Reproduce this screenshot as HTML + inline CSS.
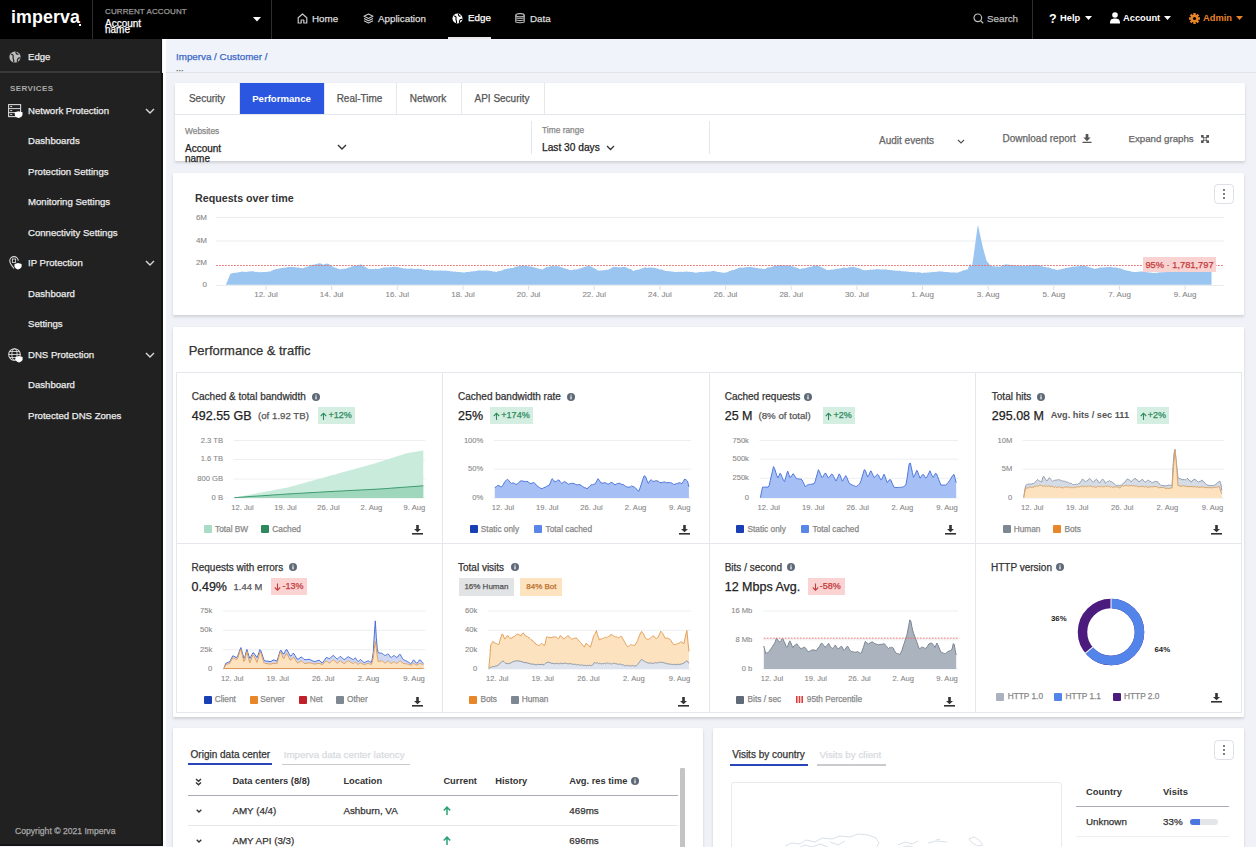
<!DOCTYPE html><html><head><meta charset="utf-8"><style>
*{box-sizing:border-box;margin:0;padding:0}
html,body{width:1256px;height:849px;overflow:hidden;background:#f0f2f8;font-family:"Liberation Sans",sans-serif;color:#333;-webkit-text-stroke:0.25px currentColor}
.a{position:absolute;white-space:nowrap}
.hdr{position:absolute;left:0;top:0;width:1256px;height:39px;background:#000}
.side{position:absolute;left:0;top:39px;width:163px;height:807px;background:#212121;border-right:2px solid #141414;border-bottom:2px solid #141414}
.card{position:absolute;background:#fff;border-radius:1px;box-shadow:0 2px 3px rgba(0,0,0,.13),0 0 1px rgba(0,0,0,.08)}
.si{position:absolute;left:28px;font-size:9.6px;color:#ececec;line-height:12px}
.t{line-height:1}
svg{position:absolute;overflow:visible}
[style*="font-weight:700"]{-webkit-text-stroke:0}
</style></head><body>
<div class="hdr">
<div class="a" style="left:11px;top:7px;font-size:17.8px;font-weight:700;color:#fff;letter-spacing:0.1px">imperva</div>
<div class="a" style="left:78.5px;top:24px;width:2px;height:2px;background:#fff"></div>
<div class="a" style="left:92px;top:0;width:1px;height:39px;background:#2e2e2e"></div>
<div class="a" style="left:271px;top:0;width:1px;height:39px;background:#2e2e2e"></div>
<div class="a" style="left:105px;top:6.5px;font-size:8px;color:#9a9a9a;letter-spacing:0.1px">CURRENT ACCOUNT</div>
<div class="a" style="left:105px;top:20.5px;font-size:10px;color:#fff;line-height:6.2px">Account<br>name</div>
<svg style="left:252.5px;top:16.5px" width="8" height="5"><path d="M0,0 L8,0 L4,4.5 Z" fill="#fff"/></svg>
<div class="a" style="left:312px;top:13px;font-size:9.8px;color:#dcdcdc">Home</div>
<div class="a" style="left:378px;top:13px;font-size:9.8px;color:#dcdcdc">Application</div>
<div class="a" style="left:468px;top:12px;font-size:9.8px;color:#fff">Edge</div>
<div class="a" style="left:530px;top:13px;font-size:9.8px;color:#dcdcdc">Data</div>
<div class="a" style="left:448px;top:37px;width:43px;height:2px;background:#e8e8e8"></div>
<div class="a" style="left:987px;top:13px;font-size:9.8px;color:#bdbdbd">Search</div>
<div class="a" style="left:1032px;top:0;width:1px;height:39px;background:#2e2e2e"></div>
<div class="a" style="left:1060px;top:13px;font-size:9.3px;color:#fff;font-weight:700">Help</div>
<div class="a" style="left:1123px;top:13px;font-size:9.3px;color:#fff;font-weight:700">Account</div>
<div class="a" style="left:1203px;top:13px;font-size:9.3px;color:#e8832a;font-weight:700">Admin</div>
</div>
<div class="side">
<div class="a" style="left:0;top:32px;width:160px;height:2px;background:#393939"></div>
</div>
<div class="si" style="top:51.0px;left:28px">Edge</div>
<div class="si" style="top:104.5px;left:28px">Network Protection</div>
<div class="si" style="top:135.0px;left:28px">Dashboards</div>
<div class="si" style="top:165.5px;left:28px">Protection Settings</div>
<div class="si" style="top:196.0px;left:28px">Monitoring Settings</div>
<div class="si" style="top:226.5px;left:28px">Connectivity Settings</div>
<div class="si" style="top:257.0px;left:28px">IP Protection</div>
<div class="si" style="top:287.5px;left:28px">Dashboard</div>
<div class="si" style="top:318.0px;left:28px">Settings</div>
<div class="si" style="top:348.5px;left:28px">DNS Protection</div>
<div class="si" style="top:379.0px;left:28px">Dashboard</div>
<div class="si" style="top:409.5px;left:28px">Protected DNS Zones</div>
<div class="a" style="left:10px;top:84px;font-size:8px;font-weight:700;color:#a8a8a8;letter-spacing:0.4px">SERVICES</div>
<div class="a" style="left:15px;top:826px;font-size:8.6px;color:#a8a8a8">Copyright © 2021 Imperva</div>
<div class="a" style="left:162px;top:39px;width:1094px;height:34px;background:#f0f3f9;border-bottom:1px solid #dfe4ec"></div>
<div class="a" style="left:163px;top:39px;width:2.5px;height:808px;background:#fff"></div>
<div class="a" style="left:176px;top:51px;font-size:9.8px;color:#3a68c8">Imperva / Customer /</div>
<div class="a" style="left:176px;top:63px;font-size:9px;color:#666">...</div>
<div class="card" style="left:175px;top:83px;width:1070px;height:78px"></div>
<div class="a" style="left:175px;top:114px;width:1070px;height:1px;background:#e3e6eb"></div>
<div class="a t" style="left:175px;top:94px;width:64px;text-align:center;font-size:10px;color:#555">Security</div>
<div class="a" style="left:239px;top:83px;width:1px;height:31px;background:#e6e8ec"></div>
<div class="a" style="left:239.5px;top:83px;width:84.0px;height:31px;background:#2a56e0"></div>
<div class="a t" style="left:239.5px;top:94px;width:84.0px;text-align:center;font-size:9.6px;font-weight:700;color:#fff">Performance</div>
<div class="a" style="left:323.5px;top:83px;width:1px;height:31px;background:#e6e8ec"></div>
<div class="a t" style="left:323.5px;top:94px;width:72.0px;text-align:center;font-size:10px;color:#555">Real-Time</div>
<div class="a" style="left:395.5px;top:83px;width:1px;height:31px;background:#e6e8ec"></div>
<div class="a t" style="left:395.5px;top:94px;width:65.0px;text-align:center;font-size:10px;color:#555">Network</div>
<div class="a" style="left:460.5px;top:83px;width:1px;height:31px;background:#e6e8ec"></div>
<div class="a t" style="left:460.5px;top:94px;width:83.0px;text-align:center;font-size:10px;color:#555">API Security</div>
<div class="a" style="left:543.5px;top:83px;width:1px;height:31px;background:#e6e8ec"></div>
<div class="a t" style="left:185px;top:126.5px;font-size:8.4px;color:#888">Websites</div>
<div class="a" style="left:185px;top:144.3px;font-size:10px;color:#222;line-height:9.5px">Account<br>name</div>
<svg style="left:337px;top:144.3px" width="10" height="7"><path d="M1,1 L5,5 L9,1" fill="none" stroke="#333" stroke-width="1.4"/></svg>
<div class="a" style="left:531px;top:121px;width:1px;height:33px;background:#e3e6eb"></div>
<div class="a" style="left:709px;top:121px;width:1px;height:33px;background:#e3e6eb"></div>
<div class="a t" style="left:542px;top:126.3px;font-size:8.4px;color:#888">Time range</div>
<div class="a t" style="left:542px;top:143px;font-size:10.2px;color:#222">Last 30 days</div>
<svg style="left:606px;top:145px" width="9" height="6"><path d="M1,1 L4.5,4.5 L8,1" fill="none" stroke="#333" stroke-width="1.3"/></svg>
<div class="a t" style="left:879px;top:135.5px;font-size:10px;color:#666">Audit events</div>
<svg style="left:957px;top:139px" width="8" height="5"><path d="M1,1 L4,4 L7,1" fill="none" stroke="#555" stroke-width="1.2"/></svg>
<div class="a t" style="left:1002.5px;top:134px;font-size:10px;color:#666">Download report</div>
<svg style="left:1082px;top:134px" width="10" height="9" viewBox="0 0 10 10"><path d="M3.5,0 H6.5 V4 H9 L5,8 L1,4 H3.5 Z M0,8.5 H10 V10 H0 Z" fill="#555"/></svg>
<div class="a t" style="left:1128.5px;top:134px;font-size:9.7px;color:#666">Expand graphs</div>
<svg style="left:1200.5px;top:135px" width="8" height="8" viewBox="0 0 9 9"><path d="M0,0 H3.5 L2.4,1.1 L4.5,3.2 L3.2,4.5 L1.1,2.4 L0,3.5 Z M9,0 V3.5 L7.9,2.4 L5.8,4.5 L4.5,3.2 L6.6,1.1 L5.5,0 Z M0,9 V5.5 L1.1,6.6 L3.2,4.5 L4.5,5.8 L2.4,7.9 L3.5,9 Z M9,9 H5.5 L6.6,7.9 L4.5,5.8 L5.8,4.5 L7.9,6.6 L9,5.5 Z" fill="#555"/></svg>
<div class="card" style="left:173px;top:173px;width:1071px;height:142px"></div>
<div class="a t" style="left:195px;top:193px;font-size:10.7px;font-weight:700;color:#333">Requests over time</div>
<div class="a" style="left:1214px;top:184px;width:20px;height:20px;border:1px solid #dcdfe4;border-radius:4px"></div>
<svg style="left:1223px;top:189px" width="2" height="10"><circle cx="1" cy="1" r="0.9" fill="#444"/><circle cx="1" cy="5" r="0.9" fill="#444"/><circle cx="1" cy="9" r="0.9" fill="#444"/></svg>
<div class="a t" style="right:1049px;top:213.7px;font-size:8px;color:#888;text-align:right;-webkit-text-stroke:0.1px #888">6M</div>
<div class="a t" style="right:1049px;top:236.7px;font-size:8px;color:#888;text-align:right;-webkit-text-stroke:0.1px #888">4M</div>
<div class="a t" style="right:1049px;top:259.2px;font-size:8px;color:#888;text-align:right;-webkit-text-stroke:0.1px #888">2M</div>
<div class="a t" style="right:1049px;top:281.4px;font-size:8px;color:#888;text-align:right;-webkit-text-stroke:0.1px #888">0</div>
<svg style="left:0;top:0" width="1256" height="849"><line x1="216" y1="217.5" x2="1224" y2="217.5" stroke="#e9ecef" stroke-width="1"/><line x1="216" y1="241" x2="1224" y2="241" stroke="#e9ecef" stroke-width="1"/><line x1="216" y1="285.5" x2="1224" y2="285.5" stroke="#e9ecef" stroke-width="1"/><path d="M226.0,284.8 L226.0,284.5 L226.5,283.3 L227.0,282.1 L227.5,280.9 L228.0,279.6 L228.5,278.4 L229.0,277.1 L229.5,275.9 L230.0,274.7 L230.5,273.7 L231.0,273.7 L231.5,273.4 L232.0,273.1 L232.5,273.2 L233.0,273.0 L233.5,272.8 L234.0,272.9 L234.5,272.8 L235.0,272.9 L235.5,272.7 L236.0,272.7 L236.5,272.5 L237.0,272.4 L237.5,272.5 L238.0,272.4 L238.5,272.3 L239.0,272.3 L239.5,272.0 L240.0,272.0 L240.5,271.9 L241.0,271.8 L241.5,271.6 L242.0,271.7 L242.5,271.6 L243.0,271.7 L243.5,271.8 L244.0,271.8 L244.5,271.9 L245.0,271.8 L245.5,271.9 L246.0,271.8 L246.5,271.9 L247.0,272.0 L247.5,271.8 L248.0,271.6 L248.5,271.4 L249.0,271.5 L249.5,271.5 L250.0,271.5 L250.5,271.3 L251.0,271.3 L251.5,271.3 L252.0,271.2 L252.5,271.3 L253.0,271.3 L253.5,271.5 L254.0,271.5 L254.5,271.7 L255.0,271.8 L255.5,272.0 L256.0,272.0 L256.5,271.8 L257.0,271.9 L257.5,272.1 L258.0,272.2 L258.5,272.2 L259.0,272.2 L259.5,272.1 L260.0,272.2 L260.5,272.2 L261.0,272.1 L261.5,271.9 L262.0,272.0 L262.5,272.2 L263.0,272.0 L263.5,272.1 L264.0,272.0 L264.5,271.9 L265.0,271.8 L265.5,271.9 L266.0,272.0 L266.5,271.9 L267.0,271.9 L267.5,271.7 L268.0,271.7 L268.5,271.5 L269.0,271.5 L269.5,271.5 L270.0,271.4 L270.5,271.4 L271.0,271.1 L271.5,270.8 L272.0,270.7 L272.5,270.4 L273.0,270.1 L273.5,269.9 L274.0,269.8 L274.5,269.6 L275.0,269.3 L275.5,269.3 L276.0,269.1 L276.5,269.1 L277.0,269.1 L277.5,269.0 L278.0,268.8 L278.5,268.7 L279.0,268.6 L279.5,268.5 L280.0,268.3 L280.5,268.2 L281.0,268.2 L281.5,268.1 L282.0,267.9 L282.5,267.9 L283.0,267.7 L283.5,267.6 L284.0,267.8 L284.5,267.7 L285.0,267.7 L285.5,267.5 L286.0,267.4 L286.5,267.4 L287.0,267.2 L287.5,267.2 L288.0,267.2 L288.5,267.0 L289.0,267.1 L289.5,267.0 L290.0,267.1 L290.5,267.0 L291.0,267.1 L291.5,267.1 L292.0,266.9 L292.5,266.7 L293.0,266.9 L293.5,267.2 L294.0,267.1 L294.5,267.2 L295.0,267.3 L295.5,267.3 L296.0,267.4 L296.5,267.4 L297.0,267.4 L297.5,267.6 L298.0,267.6 L298.5,267.6 L299.0,267.8 L299.5,267.8 L300.0,267.9 L300.5,268.1 L301.0,268.1 L301.5,268.1 L302.0,268.3 L302.5,268.3 L303.0,268.2 L303.5,268.0 L304.0,267.9 L304.5,267.6 L305.0,267.4 L305.5,267.2 L306.0,267.2 L306.5,267.0 L307.0,266.9 L307.5,266.7 L308.0,266.4 L308.5,266.3 L309.0,266.3 L309.5,266.1 L310.0,265.9 L310.5,265.5 L311.0,265.4 L311.5,265.1 L312.0,265.1 L312.5,265.1 L313.0,264.8 L313.5,264.6 L314.0,264.6 L314.5,264.5 L315.0,264.5 L315.5,264.4 L316.0,264.1 L316.5,263.9 L317.0,263.9 L317.5,263.8 L318.0,263.6 L318.5,263.5 L319.0,263.3 L319.5,263.3 L320.0,263.6 L320.5,263.6 L321.0,263.5 L321.5,263.8 L322.0,264.1 L322.5,264.4 L323.0,264.5 L323.5,264.8 L324.0,264.7 L324.5,264.3 L325.0,264.1 L325.5,264.0 L326.0,263.8 L326.5,263.5 L327.0,263.6 L327.5,263.8 L328.0,263.9 L328.5,264.0 L329.0,264.3 L329.5,264.5 L330.0,264.9 L330.5,265.0 L331.0,265.4 L331.5,265.8 L332.0,266.2 L332.5,266.6 L333.0,267.0 L333.5,267.3 L334.0,267.3 L334.5,267.6 L335.0,267.6 L335.5,267.7 L336.0,267.9 L336.5,268.1 L337.0,268.3 L337.5,268.6 L338.0,268.8 L338.5,268.9 L339.0,269.0 L339.5,269.3 L340.0,269.5 L340.5,269.5 L341.0,269.3 L341.5,269.1 L342.0,269.0 L342.5,269.0 L343.0,268.8 L343.5,268.8 L344.0,268.8 L344.5,268.8 L345.0,268.8 L345.5,268.5 L346.0,268.4 L346.5,268.4 L347.0,268.1 L347.5,267.9 L348.0,267.7 L348.5,267.6 L349.0,267.5 L349.5,267.4 L350.0,267.4 L350.5,267.1 L351.0,266.8 L351.5,266.6 L352.0,266.3 L352.5,266.1 L353.0,266.2 L353.5,266.3 L354.0,266.0 L354.5,265.9 L355.0,265.8 L355.5,265.6 L356.0,265.5 L356.5,265.5 L357.0,265.4 L357.5,265.3 L358.0,265.1 L358.5,264.9 L359.0,264.7 L359.5,264.7 L360.0,264.7 L360.5,264.6 L361.0,264.5 L361.5,264.6 L362.0,264.9 L362.5,265.3 L363.0,265.7 L363.5,265.9 L364.0,266.3 L364.5,266.7 L365.0,266.9 L365.5,267.1 L366.0,267.4 L366.5,267.8 L367.0,268.0 L367.5,268.4 L368.0,268.6 L368.5,268.8 L369.0,269.1 L369.5,269.2 L370.0,269.0 L370.5,268.9 L371.0,268.9 L371.5,269.0 L372.0,269.1 L372.5,269.0 L373.0,269.1 L373.5,269.2 L374.0,269.0 L374.5,269.0 L375.0,268.8 L375.5,268.8 L376.0,268.8 L376.5,268.9 L377.0,269.0 L377.5,269.0 L378.0,269.0 L378.5,268.9 L379.0,268.7 L379.5,268.7 L380.0,268.4 L380.5,268.2 L381.0,268.3 L381.5,268.1 L382.0,267.9 L382.5,267.7 L383.0,267.8 L383.5,267.6 L384.0,267.4 L384.5,267.5 L385.0,267.3 L385.5,267.4 L386.0,267.4 L386.5,267.5 L387.0,267.6 L387.5,267.6 L388.0,267.6 L388.5,267.3 L389.0,267.4 L389.5,267.3 L390.0,267.3 L390.5,267.1 L391.0,267.1 L391.5,267.2 L392.0,267.0 L392.5,266.8 L393.0,266.8 L393.5,266.8 L394.0,266.7 L394.5,266.7 L395.0,266.7 L395.5,266.8 L396.0,267.0 L396.5,267.1 L397.0,267.1 L397.5,267.2 L398.0,267.2 L398.5,267.3 L399.0,267.3 L399.5,267.4 L400.0,267.7 L400.5,267.7 L401.0,267.9 L401.5,267.9 L402.0,268.1 L402.5,268.2 L403.0,268.3 L403.5,268.4 L404.0,268.4 L404.5,268.5 L405.0,268.6 L405.5,268.5 L406.0,268.4 L406.5,268.5 L407.0,268.7 L407.5,268.7 L408.0,268.7 L408.5,268.8 L409.0,268.7 L409.5,268.6 L410.0,268.5 L410.5,268.6 L411.0,268.6 L411.5,268.5 L412.0,268.6 L412.5,268.8 L413.0,268.8 L413.5,268.9 L414.0,268.9 L414.5,269.0 L415.0,269.1 L415.5,269.0 L416.0,268.9 L416.5,268.8 L417.0,268.8 L417.5,268.8 L418.0,268.7 L418.5,268.7 L419.0,268.7 L419.5,268.9 L420.0,268.8 L420.5,269.1 L421.0,269.1 L421.5,269.2 L422.0,269.2 L422.5,269.4 L423.0,269.5 L423.5,269.6 L424.0,269.6 L424.5,269.7 L425.0,269.9 L425.5,269.8 L426.0,270.0 L426.5,270.1 L427.0,270.1 L427.5,270.0 L428.0,270.0 L428.5,270.1 L429.0,270.2 L429.5,270.3 L430.0,270.5 L430.5,270.4 L431.0,270.3 L431.5,270.2 L432.0,270.1 L432.5,270.2 L433.0,270.4 L433.5,270.6 L434.0,270.5 L434.5,270.7 L435.0,270.6 L435.5,270.6 L436.0,270.7 L436.5,270.6 L437.0,270.5 L437.5,270.6 L438.0,270.6 L438.5,270.6 L439.0,270.6 L439.5,270.7 L440.0,270.6 L440.5,270.5 L441.0,270.5 L441.5,270.6 L442.0,270.5 L442.5,270.6 L443.0,270.8 L443.5,270.7 L444.0,270.8 L444.5,270.7 L445.0,270.6 L445.5,270.7 L446.0,270.6 L446.5,270.8 L447.0,271.0 L447.5,270.8 L448.0,271.0 L448.5,271.0 L449.0,271.1 L449.5,271.2 L450.0,271.1 L450.5,271.2 L451.0,271.3 L451.5,271.4 L452.0,271.3 L452.5,271.4 L453.0,271.6 L453.5,271.7 L454.0,271.8 L454.5,271.6 L455.0,271.7 L455.5,271.6 L456.0,271.8 L456.5,271.9 L457.0,271.9 L457.5,271.8 L458.0,271.9 L458.5,272.0 L459.0,271.9 L459.5,272.1 L460.0,272.2 L460.5,272.1 L461.0,272.3 L461.5,272.2 L462.0,272.2 L462.5,272.3 L463.0,272.4 L463.5,272.5 L464.0,272.6 L464.5,272.6 L465.0,272.4 L465.5,272.2 L466.0,272.0 L466.5,272.1 L467.0,272.1 L467.5,272.1 L468.0,272.1 L468.5,272.0 L469.0,271.8 L469.5,271.8 L470.0,271.8 L470.5,271.6 L471.0,271.6 L471.5,271.4 L472.0,271.5 L472.5,271.4 L473.0,271.3 L473.5,271.2 L474.0,271.2 L474.5,271.2 L475.0,271.1 L475.5,271.2 L476.0,271.0 L476.5,270.9 L477.0,270.7 L477.5,270.5 L478.0,270.6 L478.5,270.7 L479.0,270.5 L479.5,270.3 L480.0,270.3 L480.5,270.4 L481.0,270.5 L481.5,270.7 L482.0,270.7 L482.5,270.6 L483.0,270.5 L483.5,270.4 L484.0,270.5 L484.5,270.5 L485.0,270.4 L485.5,270.3 L486.0,270.5 L486.5,270.3 L487.0,270.4 L487.5,270.6 L488.0,270.8 L488.5,270.7 L489.0,270.7 L489.5,270.8 L490.0,270.8 L490.5,271.0 L491.0,271.1 L491.5,271.1 L492.0,271.3 L492.5,271.4 L493.0,271.5 L493.5,271.6 L494.0,271.5 L494.5,271.6 L495.0,271.8 L495.5,271.8 L496.0,271.9 L496.5,271.9 L497.0,271.7 L497.5,271.6 L498.0,271.2 L498.5,271.1 L499.0,271.0 L499.5,270.9 L500.0,270.7 L500.5,270.8 L501.0,270.8 L501.5,270.5 L502.0,270.4 L502.5,270.3 L503.0,270.0 L503.5,269.8 L504.0,269.5 L504.5,269.2 L505.0,269.1 L505.5,269.2 L506.0,269.0 L506.5,269.0 L507.0,268.9 L507.5,268.6 L508.0,268.6 L508.5,268.5 L509.0,268.5 L509.5,268.4 L510.0,268.3 L510.5,268.1 L511.0,268.1 L511.5,268.1 L512.0,268.1 L512.5,267.9 L513.0,267.9 L513.5,267.8 L514.0,267.5 L514.5,267.2 L515.0,267.0 L515.5,266.8 L516.0,266.6 L516.5,266.5 L517.0,266.5 L517.5,266.4 L518.0,266.3 L518.5,266.3 L519.0,266.2 L519.5,266.1 L520.0,266.1 L520.5,266.0 L521.0,265.8 L521.5,265.8 L522.0,265.8 L522.5,265.7 L523.0,265.6 L523.5,265.5 L524.0,265.7 L524.5,265.7 L525.0,265.7 L525.5,265.7 L526.0,266.0 L526.5,266.0 L527.0,266.1 L527.5,266.2 L528.0,266.2 L528.5,266.3 L529.0,266.4 L529.5,266.5 L530.0,266.5 L530.5,266.5 L531.0,266.6 L531.5,266.8 L532.0,266.8 L532.5,266.8 L533.0,267.0 L533.5,267.2 L534.0,267.4 L534.5,267.4 L535.0,267.6 L535.5,267.7 L536.0,267.8 L536.5,268.1 L537.0,268.2 L537.5,268.2 L538.0,268.4 L538.5,268.5 L539.0,268.7 L539.5,268.8 L540.0,268.9 L540.5,268.9 L541.0,269.2 L541.5,269.3 L542.0,269.6 L542.5,269.4 L543.0,269.3 L543.5,268.9 L544.0,268.5 L544.5,268.2 L545.0,268.0 L545.5,267.7 L546.0,267.4 L546.5,267.0 L547.0,267.1 L547.5,267.2 L548.0,267.2 L548.5,266.9 L549.0,266.7 L549.5,266.5 L550.0,266.4 L550.5,266.2 L551.0,266.0 L551.5,266.0 L552.0,266.2 L552.5,266.0 L553.0,266.2 L553.5,266.1 L554.0,266.2 L554.5,266.3 L555.0,266.4 L555.5,266.2 L556.0,266.0 L556.5,266.0 L557.0,266.2 L557.5,266.2 L558.0,266.3 L558.5,266.5 L559.0,266.5 L559.5,266.6 L560.0,266.7 L560.5,266.9 L561.0,267.2 L561.5,267.2 L562.0,267.4 L562.5,267.6 L563.0,267.9 L563.5,268.0 L564.0,268.3 L564.5,268.4 L565.0,268.5 L565.5,268.6 L566.0,268.8 L566.5,269.0 L567.0,269.0 L567.5,269.1 L568.0,269.3 L568.5,269.5 L569.0,269.8 L569.5,269.9 L570.0,270.0 L570.5,270.1 L571.0,270.3 L571.5,270.1 L572.0,270.0 L572.5,269.9 L573.0,269.9 L573.5,269.6 L574.0,269.5 L574.5,269.5 L575.0,269.4 L575.5,269.5 L576.0,269.5 L576.5,269.3 L577.0,269.4 L577.5,269.3 L578.0,269.1 L578.5,268.9 L579.0,268.7 L579.5,268.5 L580.0,268.6 L580.5,268.3 L581.0,268.2 L581.5,267.9 L582.0,267.7 L582.5,267.7 L583.0,267.5 L583.5,267.2 L584.0,267.0 L584.5,266.9 L585.0,266.9 L585.5,266.6 L586.0,266.4 L586.5,266.5 L587.0,266.3 L587.5,266.2 L588.0,266.1 L588.5,266.1 L589.0,266.1 L589.5,266.1 L590.0,266.2 L590.5,266.4 L591.0,266.5 L591.5,266.7 L592.0,267.1 L592.5,267.3 L593.0,267.4 L593.5,267.9 L594.0,268.1 L594.5,268.5 L595.0,268.7 L595.5,268.9 L596.0,269.1 L596.5,269.6 L597.0,269.9 L597.5,270.3 L598.0,270.6 L598.5,270.7 L599.0,270.6 L599.5,270.6 L600.0,270.5 L600.5,270.4 L601.0,270.4 L601.5,270.4 L602.0,270.5 L602.5,270.3 L603.0,270.3 L603.5,270.2 L604.0,270.2 L604.5,270.0 L605.0,269.9 L605.5,269.9 L606.0,269.7 L606.5,269.7 L607.0,269.7 L607.5,269.7 L608.0,269.7 L608.5,269.6 L609.0,269.3 L609.5,269.0 L610.0,268.9 L610.5,268.6 L611.0,268.3 L611.5,267.9 L612.0,267.6 L612.5,267.2 L613.0,267.2 L613.5,267.0 L614.0,266.9 L614.5,266.9 L615.0,266.8 L615.5,267.0 L616.0,267.0 L616.5,266.9 L617.0,267.1 L617.5,267.2 L618.0,267.3 L618.5,267.2 L619.0,267.3 L619.5,267.2 L620.0,267.4 L620.5,267.5 L621.0,267.3 L621.5,267.4 L622.0,267.3 L622.5,267.1 L623.0,267.1 L623.5,267.0 L624.0,267.0 L624.5,267.0 L625.0,266.9 L625.5,267.2 L626.0,267.3 L626.5,267.5 L627.0,267.7 L627.5,268.0 L628.0,268.4 L628.5,268.5 L629.0,268.6 L629.5,268.8 L630.0,269.0 L630.5,269.1 L631.0,269.2 L631.5,269.6 L632.0,269.9 L632.5,270.4 L633.0,270.8 L633.5,271.0 L634.0,270.8 L634.5,270.5 L635.0,270.3 L635.5,270.2 L636.0,270.0 L636.5,269.9 L637.0,269.8 L637.5,269.8 L638.0,269.6 L638.5,269.4 L639.0,269.4 L639.5,269.4 L640.0,269.2 L640.5,269.0 L641.0,268.9 L641.5,268.6 L642.0,268.4 L642.5,268.2 L643.0,268.1 L643.5,267.9 L644.0,267.6 L644.5,267.4 L645.0,267.4 L645.5,267.3 L646.0,267.5 L646.5,267.7 L647.0,267.9 L647.5,267.8 L648.0,267.7 L648.5,267.6 L649.0,267.6 L649.5,267.6 L650.0,267.5 L650.5,267.6 L651.0,267.6 L651.5,267.6 L652.0,267.6 L652.5,267.8 L653.0,267.8 L653.5,267.8 L654.0,267.7 L654.5,267.8 L655.0,267.9 L655.5,268.1 L656.0,268.3 L656.5,268.6 L657.0,268.6 L657.5,268.6 L658.0,268.8 L658.5,269.0 L659.0,269.1 L659.5,269.4 L660.0,269.5 L660.5,269.5 L661.0,269.5 L661.5,269.4 L662.0,269.6 L662.5,269.8 L663.0,270.1 L663.5,270.2 L664.0,270.4 L664.5,270.6 L665.0,270.8 L665.5,270.9 L666.0,271.0 L666.5,271.0 L667.0,270.9 L667.5,270.9 L668.0,271.0 L668.5,271.2 L669.0,271.3 L669.5,271.3 L670.0,271.3 L670.5,271.3 L671.0,271.5 L671.5,271.5 L672.0,271.7 L672.5,271.6 L673.0,271.6 L673.5,271.7 L674.0,271.7 L674.5,271.9 L675.0,272.0 L675.5,272.1 L676.0,272.1 L676.5,271.9 L677.0,271.9 L677.5,271.9 L678.0,271.8 L678.5,271.7 L679.0,271.8 L679.5,271.9 L680.0,271.7 L680.5,271.7 L681.0,271.7 L681.5,271.6 L682.0,271.8 L682.5,271.9 L683.0,271.9 L683.5,271.7 L684.0,271.8 L684.5,271.7 L685.0,271.6 L685.5,271.7 L686.0,271.6 L686.5,271.5 L687.0,271.6 L687.5,271.8 L688.0,271.8 L688.5,271.9 L689.0,271.8 L689.5,271.8 L690.0,271.8 L690.5,272.1 L691.0,272.0 L691.5,272.0 L692.0,272.0 L692.5,271.9 L693.0,272.0 L693.5,272.2 L694.0,272.5 L694.5,272.6 L695.0,272.8 L695.5,272.7 L696.0,272.6 L696.5,272.7 L697.0,272.5 L697.5,272.4 L698.0,272.4 L698.5,272.3 L699.0,272.2 L699.5,272.1 L700.0,271.9 L700.5,272.1 L701.0,272.0 L701.5,272.1 L702.0,272.0 L702.5,272.1 L703.0,272.1 L703.5,272.2 L704.0,272.0 L704.5,271.8 L705.0,271.9 L705.5,271.7 L706.0,271.6 L706.5,271.7 L707.0,271.8 L707.5,271.6 L708.0,271.7 L708.5,271.7 L709.0,271.6 L709.5,271.5 L710.0,271.4 L710.5,271.5 L711.0,271.4 L711.5,271.3 L712.0,271.1 L712.5,270.9 L713.0,270.9 L713.5,271.0 L714.0,270.9 L714.5,270.8 L715.0,271.1 L715.5,271.4 L716.0,271.7 L716.5,271.6 L717.0,271.7 L717.5,271.9 L718.0,272.0 L718.5,272.1 L719.0,272.1 L719.5,272.0 L720.0,272.0 L720.5,272.2 L721.0,272.4 L721.5,272.5 L722.0,272.5 L722.5,272.6 L723.0,272.6 L723.5,272.7 L724.0,272.9 L724.5,272.8 L725.0,272.6 L725.5,272.6 L726.0,272.6 L726.5,272.3 L727.0,272.3 L727.5,272.2 L728.0,271.9 L728.5,271.6 L729.0,271.3 L729.5,271.0 L730.0,271.0 L730.5,270.8 L731.0,270.8 L731.5,270.4 L732.0,270.1 L732.5,270.1 L733.0,270.0 L733.5,270.0 L734.0,269.9 L734.5,269.7 L735.0,269.6 L735.5,269.3 L736.0,269.1 L736.5,268.9 L737.0,268.6 L737.5,268.5 L738.0,268.3 L738.5,268.1 L739.0,267.9 L739.5,267.7 L740.0,267.4 L740.5,267.4 L741.0,267.6 L741.5,267.7 L742.0,267.8 L742.5,267.8 L743.0,267.7 L743.5,267.8 L744.0,267.6 L744.5,267.4 L745.0,267.3 L745.5,267.3 L746.0,267.2 L746.5,267.2 L747.0,267.1 L747.5,267.2 L748.0,267.1 L748.5,267.0 L749.0,267.0 L749.5,267.0 L750.0,267.1 L750.5,267.1 L751.0,267.1 L751.5,267.2 L752.0,267.1 L752.5,267.2 L753.0,267.4 L753.5,267.5 L754.0,267.4 L754.5,267.6 L755.0,267.6 L755.5,267.9 L756.0,267.9 L756.5,267.8 L757.0,267.9 L757.5,268.1 L758.0,268.2 L758.5,268.4 L759.0,268.5 L759.5,268.5 L760.0,268.5 L760.5,268.5 L761.0,268.6 L761.5,268.6 L762.0,268.7 L762.5,268.9 L763.0,269.0 L763.5,269.0 L764.0,268.9 L764.5,269.0 L765.0,269.0 L765.5,268.7 L766.0,268.4 L766.5,268.1 L767.0,267.9 L767.5,267.6 L768.0,267.5 L768.5,267.5 L769.0,267.4 L769.5,267.3 L770.0,267.3 L770.5,267.2 L771.0,267.2 L771.5,267.0 L772.0,266.9 L772.5,266.5 L773.0,266.5 L773.5,266.3 L774.0,266.1 L774.5,266.0 L775.0,265.8 L775.5,265.6 L776.0,265.7 L776.5,265.7 L777.0,265.5 L777.5,265.4 L778.0,265.3 L778.5,265.1 L779.0,265.3 L779.5,265.2 L780.0,265.1 L780.5,265.1 L781.0,265.1 L781.5,265.1 L782.0,265.2 L782.5,265.3 L783.0,265.3 L783.5,265.2 L784.0,265.4 L784.5,265.4 L785.0,265.3 L785.5,265.3 L786.0,265.4 L786.5,265.6 L787.0,265.4 L787.5,265.2 L788.0,265.2 L788.5,265.2 L789.0,265.4 L789.5,265.5 L790.0,265.6 L790.5,265.7 L791.0,265.9 L791.5,266.2 L792.0,266.3 L792.5,266.4 L793.0,266.4 L793.5,266.7 L794.0,266.7 L794.5,267.0 L795.0,267.2 L795.5,267.4 L796.0,267.4 L796.5,267.5 L797.0,267.7 L797.5,268.0 L798.0,268.2 L798.5,268.3 L799.0,268.7 L799.5,268.9 L800.0,269.1 L800.5,268.9 L801.0,268.7 L801.5,268.7 L802.0,268.5 L802.5,268.4 L803.0,268.3 L803.5,268.2 L804.0,268.2 L804.5,268.2 L805.0,268.2 L805.5,268.2 L806.0,268.0 L806.5,267.7 L807.0,267.5 L807.5,267.4 L808.0,267.2 L808.5,267.2 L809.0,267.0 L809.5,267.0 L810.0,267.1 L810.5,266.8 L811.0,266.9 L811.5,266.7 L812.0,266.5 L812.5,266.3 L813.0,266.0 L813.5,265.9 L814.0,265.8 L814.5,265.8 L815.0,265.8 L815.5,265.6 L816.0,265.4 L816.5,265.3 L817.0,265.4 L817.5,265.5 L818.0,265.7 L818.5,266.0 L819.0,266.2 L819.5,266.3 L820.0,266.5 L820.5,266.7 L821.0,267.0 L821.5,267.2 L822.0,267.6 L822.5,267.7 L823.0,268.0 L823.5,268.3 L824.0,268.5 L824.5,268.8 L825.0,269.0 L825.5,269.3 L826.0,269.6 L826.5,269.9 L827.0,270.1 L827.5,269.9 L828.0,269.9 L828.5,270.0 L829.0,269.9 L829.5,269.9 L830.0,269.7 L830.5,269.8 L831.0,269.8 L831.5,269.6 L832.0,269.6 L832.5,269.7 L833.0,269.5 L833.5,269.6 L834.0,269.5 L834.5,269.3 L835.0,269.3 L835.5,269.1 L836.0,269.1 L836.5,269.0 L837.0,268.8 L837.5,268.7 L838.0,268.7 L838.5,268.6 L839.0,268.5 L839.5,268.6 L840.0,268.5 L840.5,268.4 L841.0,268.3 L841.5,268.3 L842.0,268.1 L842.5,267.8 L843.0,267.8 L843.5,267.8 L844.0,267.6 L844.5,267.7 L845.0,267.8 L845.5,267.7 L846.0,267.8 L846.5,267.9 L847.0,267.9 L847.5,267.7 L848.0,267.4 L848.5,267.4 L849.0,267.4 L849.5,267.3 L850.0,267.2 L850.5,267.1 L851.0,267.0 L851.5,267.0 L852.0,266.9 L852.5,266.8 L853.0,266.7 L853.5,266.9 L854.0,267.0 L854.5,267.3 L855.0,267.3 L855.5,267.5 L856.0,267.5 L856.5,267.7 L857.0,267.9 L857.5,268.0 L858.0,268.0 L858.5,268.2 L859.0,268.3 L859.5,268.5 L860.0,268.6 L860.5,268.7 L861.0,268.9 L861.5,269.3 L862.0,269.7 L862.5,269.9 L863.0,270.0 L863.5,270.1 L864.0,270.2 L864.5,270.2 L865.0,270.3 L865.5,270.1 L866.0,270.2 L866.5,270.2 L867.0,270.1 L867.5,270.0 L868.0,270.1 L868.5,269.9 L869.0,269.9 L869.5,269.8 L870.0,269.7 L870.5,269.5 L871.0,269.6 L871.5,269.7 L872.0,269.7 L872.5,269.8 L873.0,269.5 L873.5,269.5 L874.0,269.6 L874.5,269.4 L875.0,269.3 L875.5,269.4 L876.0,269.2 L876.5,269.3 L877.0,269.1 L877.5,269.2 L878.0,269.1 L878.5,269.2 L879.0,269.1 L879.5,269.3 L880.0,269.4 L880.5,269.4 L881.0,269.5 L881.5,269.5 L882.0,269.6 L882.5,269.5 L883.0,269.6 L883.5,269.6 L884.0,269.6 L884.5,269.4 L885.0,269.3 L885.5,269.4 L886.0,269.4 L886.5,269.5 L887.0,269.5 L887.5,269.7 L888.0,269.9 L888.5,270.0 L889.0,269.9 L889.5,269.8 L890.0,269.9 L890.5,270.0 L891.0,270.2 L891.5,270.2 L892.0,270.1 L892.5,270.3 L893.0,270.5 L893.5,270.5 L894.0,270.6 L894.5,270.5 L895.0,270.6 L895.5,270.7 L896.0,270.8 L896.5,270.7 L897.0,270.6 L897.5,270.7 L898.0,270.9 L898.5,270.8 L899.0,270.7 L899.5,270.6 L900.0,270.8 L900.5,270.9 L901.0,270.9 L901.5,271.2 L902.0,271.3 L902.5,271.3 L903.0,271.4 L903.5,271.3 L904.0,271.3 L904.5,271.4 L905.0,271.4 L905.5,271.3 L906.0,271.4 L906.5,271.4 L907.0,271.6 L907.5,271.5 L908.0,271.7 L908.5,271.7 L909.0,271.9 L909.5,271.9 L910.0,272.0 L910.5,272.0 L911.0,272.0 L911.5,272.0 L912.0,272.2 L912.5,272.2 L913.0,272.1 L913.5,272.2 L914.0,272.1 L914.5,272.1 L915.0,272.2 L915.5,272.3 L916.0,272.4 L916.5,272.4 L917.0,272.3 L917.5,272.2 L918.0,272.2 L918.5,272.2 L919.0,272.3 L919.5,272.3 L920.0,272.5 L920.5,272.6 L921.0,272.7 L921.5,272.9 L922.0,273.0 L922.5,272.9 L923.0,272.8 L923.5,272.7 L924.0,272.7 L924.5,272.7 L925.0,272.5 L925.5,272.7 L926.0,272.7 L926.5,272.7 L927.0,272.6 L927.5,272.5 L928.0,272.6 L928.5,272.5 L929.0,272.4 L929.5,272.5 L930.0,272.3 L930.5,272.3 L931.0,272.3 L931.5,272.1 L932.0,272.3 L932.5,272.2 L933.0,272.0 L933.5,271.9 L934.0,271.7 L934.5,271.8 L935.0,271.9 L935.5,272.0 L936.0,271.8 L936.5,271.8 L937.0,271.7 L937.5,271.7 L938.0,271.6 L938.5,271.5 L939.0,271.3 L939.5,271.4 L940.0,271.3 L940.5,271.6 L941.0,271.4 L941.5,271.7 L942.0,271.6 L942.5,271.5 L943.0,271.6 L943.5,271.7 L944.0,271.9 L944.5,271.9 L945.0,272.0 L945.5,271.9 L946.0,272.0 L946.5,272.0 L947.0,272.2 L947.5,272.1 L948.0,272.0 L948.5,272.1 L949.0,272.3 L949.5,272.3 L950.0,272.4 L950.5,272.4 L951.0,272.4 L951.5,272.4 L952.0,272.5 L952.5,272.4 L953.0,272.3 L953.5,272.5 L954.0,272.4 L954.5,272.4 L955.0,272.4 L955.5,272.4 L956.0,272.5 L956.5,272.6 L957.0,272.8 L957.5,272.8 L958.0,272.6 L958.5,272.3 L959.0,272.0 L959.5,271.8 L960.0,271.7 L960.5,271.6 L961.0,271.4 L961.5,271.2 L962.0,270.9 L962.5,270.6 L963.0,270.5 L963.5,270.3 L964.0,270.4 L964.5,270.3 L965.0,270.1 L965.5,270.0 L966.0,269.7 L966.5,269.6 L967.0,269.6 L967.5,269.4 L968.0,268.8 L968.5,267.5 L969.0,266.2 L969.5,264.9 L970.0,263.7 L970.5,264.5 L971.0,265.3 L971.5,266.1 L972.0,266.0 L972.5,263.1 L973.0,260.1 L973.5,256.5 L974.0,252.8 L974.5,249.2 L975.0,245.4 L975.5,241.7 L976.0,238.1 L976.5,234.6 L977.0,231.1 L977.5,227.3 L978.0,225.0 L978.5,227.4 L979.0,229.8 L979.5,232.2 L980.0,234.4 L980.5,236.8 L981.0,239.2 L981.5,241.3 L982.0,243.6 L982.5,246.0 L983.0,247.7 L983.5,249.7 L984.0,251.6 L984.5,253.4 L985.0,255.1 L985.5,256.8 L986.0,258.8 L986.5,260.6 L987.0,261.4 L987.5,262.0 L988.0,262.8 L988.5,263.3 L989.0,263.7 L989.5,264.5 L990.0,265.1 L990.5,265.7 L991.0,266.1 L991.5,266.1 L992.0,266.0 L992.5,266.2 L993.0,266.2 L993.5,266.1 L994.0,266.4 L994.5,266.3 L995.0,266.5 L995.5,266.5 L996.0,266.5 L996.5,266.5 L997.0,266.5 L997.5,266.6 L998.0,266.7 L998.5,266.7 L999.0,266.7 L999.5,266.6 L1000.0,266.6 L1000.5,266.5 L1001.0,266.3 L1001.5,265.9 L1002.0,265.6 L1002.5,265.3 L1003.0,265.0 L1003.5,264.9 L1004.0,264.9 L1004.5,264.8 L1005.0,264.6 L1005.5,264.4 L1006.0,264.4 L1006.5,264.3 L1007.0,264.5 L1007.5,264.5 L1008.0,264.5 L1008.5,264.7 L1009.0,264.6 L1009.5,264.9 L1010.0,264.8 L1010.5,265.0 L1011.0,264.9 L1011.5,265.1 L1012.0,265.1 L1012.5,265.1 L1013.0,265.2 L1013.5,265.3 L1014.0,265.3 L1014.5,265.2 L1015.0,265.3 L1015.5,265.2 L1016.0,265.4 L1016.5,265.5 L1017.0,265.4 L1017.5,265.4 L1018.0,265.4 L1018.5,265.4 L1019.0,265.5 L1019.5,265.6 L1020.0,265.6 L1020.5,265.6 L1021.0,265.7 L1021.5,265.9 L1022.0,265.9 L1022.5,266.0 L1023.0,266.0 L1023.5,265.8 L1024.0,265.7 L1024.5,265.8 L1025.0,265.8 L1025.5,265.7 L1026.0,265.7 L1026.5,265.8 L1027.0,265.7 L1027.5,265.6 L1028.0,265.5 L1028.5,265.3 L1029.0,265.3 L1029.5,265.3 L1030.0,265.3 L1030.5,265.3 L1031.0,265.2 L1031.5,265.3 L1032.0,265.1 L1032.5,265.3 L1033.0,265.1 L1033.5,265.2 L1034.0,265.1 L1034.5,265.1 L1035.0,265.0 L1035.5,264.8 L1036.0,264.8 L1036.5,264.9 L1037.0,265.0 L1037.5,265.1 L1038.0,265.2 L1038.5,265.1 L1039.0,265.2 L1039.5,265.2 L1040.0,265.4 L1040.5,265.5 L1041.0,265.7 L1041.5,266.0 L1042.0,266.3 L1042.5,266.5 L1043.0,266.7 L1043.5,266.8 L1044.0,266.8 L1044.5,267.0 L1045.0,267.0 L1045.5,266.9 L1046.0,267.2 L1046.5,267.2 L1047.0,267.4 L1047.5,267.4 L1048.0,267.4 L1048.5,267.6 L1049.0,267.6 L1049.5,267.8 L1050.0,268.1 L1050.5,268.1 L1051.0,268.3 L1051.5,268.6 L1052.0,268.7 L1052.5,269.0 L1053.0,269.2 L1053.5,269.1 L1054.0,269.1 L1054.5,269.3 L1055.0,269.6 L1055.5,269.6 L1056.0,269.8 L1056.5,269.8 L1057.0,270.0 L1057.5,269.9 L1058.0,269.8 L1058.5,269.8 L1059.0,269.5 L1059.5,269.5 L1060.0,269.5 L1060.5,269.5 L1061.0,269.3 L1061.5,269.1 L1062.0,268.9 L1062.5,268.9 L1063.0,268.8 L1063.5,268.6 L1064.0,268.5 L1064.5,268.5 L1065.0,268.3 L1065.5,268.1 L1066.0,268.1 L1066.5,268.1 L1067.0,267.9 L1067.5,267.6 L1068.0,267.7 L1068.5,267.7 L1069.0,267.6 L1069.5,267.4 L1070.0,267.5 L1070.5,267.3 L1071.0,267.1 L1071.5,266.9 L1072.0,266.7 L1072.5,266.7 L1073.0,266.6 L1073.5,266.7 L1074.0,266.7 L1074.5,266.6 L1075.0,266.6 L1075.5,266.6 L1076.0,266.6 L1076.5,266.5 L1077.0,266.4 L1077.5,266.3 L1078.0,266.4 L1078.5,266.2 L1079.0,266.2 L1079.5,266.1 L1080.0,266.1 L1080.5,265.9 L1081.0,265.8 L1081.5,265.7 L1082.0,265.7 L1082.5,265.5 L1083.0,265.5 L1083.5,265.5 L1084.0,265.7 L1084.5,265.9 L1085.0,265.9 L1085.5,265.9 L1086.0,266.0 L1086.5,266.4 L1087.0,266.5 L1087.5,266.7 L1088.0,266.8 L1088.5,267.0 L1089.0,267.3 L1089.5,267.5 L1090.0,267.5 L1090.5,267.7 L1091.0,267.8 L1091.5,267.8 L1092.0,268.1 L1092.5,268.2 L1093.0,268.3 L1093.5,268.5 L1094.0,268.7 L1094.5,268.8 L1095.0,268.8 L1095.5,268.8 L1096.0,268.7 L1096.5,268.5 L1097.0,268.4 L1097.5,268.3 L1098.0,268.3 L1098.5,268.2 L1099.0,268.0 L1099.5,267.8 L1100.0,267.6 L1100.5,267.4 L1101.0,267.6 L1101.5,267.6 L1102.0,267.4 L1102.5,267.5 L1103.0,267.5 L1103.5,267.3 L1104.0,267.4 L1104.5,267.2 L1105.0,267.4 L1105.5,267.2 L1106.0,267.1 L1106.5,267.0 L1107.0,267.1 L1107.5,267.2 L1108.0,267.1 L1108.5,266.9 L1109.0,266.9 L1109.5,266.9 L1110.0,266.7 L1110.5,266.8 L1111.0,266.9 L1111.5,267.2 L1112.0,267.3 L1112.5,267.4 L1113.0,267.6 L1113.5,267.6 L1114.0,267.5 L1114.5,267.4 L1115.0,267.4 L1115.5,267.6 L1116.0,267.5 L1116.5,267.6 L1117.0,267.7 L1117.5,267.9 L1118.0,268.0 L1118.5,268.2 L1119.0,268.3 L1119.5,268.3 L1120.0,268.3 L1120.5,268.4 L1121.0,268.5 L1121.5,268.7 L1122.0,269.0 L1122.5,269.2 L1123.0,269.5 L1123.5,269.7 L1124.0,269.7 L1124.5,269.9 L1125.0,270.1 L1125.5,270.3 L1126.0,270.4 L1126.5,270.4 L1127.0,270.6 L1127.5,270.6 L1128.0,270.9 L1128.5,270.8 L1129.0,271.0 L1129.5,271.1 L1130.0,271.1 L1130.5,271.3 L1131.0,271.4 L1131.5,271.7 L1132.0,271.8 L1132.5,271.8 L1133.0,271.9 L1133.5,272.0 L1134.0,271.8 L1134.5,271.9 L1135.0,272.0 L1135.5,272.1 L1136.0,272.1 L1136.5,272.0 L1137.0,271.8 L1137.5,271.8 L1138.0,271.7 L1138.5,271.7 L1139.0,271.7 L1139.5,271.7 L1140.0,271.6 L1140.5,271.5 L1141.0,271.6 L1141.5,271.6 L1142.0,271.6 L1142.5,271.6 L1143.0,271.6 L1143.5,271.7 L1144.0,271.8 L1144.5,271.7 L1145.0,272.0 L1145.5,272.1 L1146.0,272.3 L1146.5,272.2 L1147.0,272.1 L1147.5,272.3 L1148.0,272.4 L1148.5,272.5 L1149.0,272.4 L1149.5,272.6 L1150.0,272.6 L1150.5,272.6 L1151.0,272.7 L1151.5,272.7 L1152.0,272.8 L1152.5,272.9 L1153.0,273.0 L1153.5,272.8 L1154.0,272.8 L1154.5,272.9 L1155.0,272.9 L1155.5,272.8 L1156.0,272.9 L1156.5,272.7 L1157.0,272.7 L1157.5,272.7 L1158.0,272.7 L1158.5,272.5 L1159.0,272.5 L1159.5,272.3 L1160.0,272.3 L1160.5,272.2 L1161.0,272.3 L1161.5,272.4 L1162.0,272.3 L1162.5,272.3 L1163.0,272.2 L1163.5,272.2 L1164.0,272.0 L1164.5,272.1 L1165.0,272.2 L1165.5,272.2 L1166.0,272.0 L1166.5,272.1 L1167.0,271.8 L1167.5,271.8 L1168.0,271.8 L1168.5,271.6 L1169.0,271.5 L1169.5,271.6 L1170.0,271.6 L1170.5,271.5 L1171.0,271.6 L1171.5,271.5 L1172.0,271.6 L1172.5,271.6 L1173.0,271.4 L1173.5,271.5 L1174.0,271.3 L1174.5,271.2 L1175.0,271.2 L1175.5,271.1 L1176.0,271.1 L1176.5,271.2 L1177.0,271.2 L1177.5,271.1 L1178.0,271.2 L1178.5,271.4 L1179.0,271.4 L1179.5,271.4 L1180.0,271.3 L1180.5,271.3 L1181.0,271.5 L1181.5,271.6 L1182.0,271.4 L1182.5,271.3 L1183.0,271.2 L1183.5,271.3 L1184.0,271.2 L1184.5,271.1 L1185.0,271.2 L1185.5,271.1 L1186.0,271.3 L1186.5,271.3 L1187.0,271.4 L1187.5,271.6 L1188.0,271.4 L1188.5,271.5 L1189.0,271.5 L1189.5,271.4 L1190.0,271.2 L1190.5,271.3 L1191.0,271.4 L1191.5,271.3 L1192.0,271.4 L1192.5,271.3 L1193.0,271.3 L1193.5,271.2 L1194.0,271.1 L1194.5,271.3 L1195.0,271.3 L1195.5,271.2 L1196.0,271.1 L1196.5,271.2 L1197.0,271.2 L1197.5,271.3 L1198.0,271.2 L1198.5,271.3 L1199.0,271.4 L1199.5,271.5 L1200.0,271.5 L1200.5,271.3 L1201.0,271.2 L1201.5,271.3 L1202.0,271.2 L1202.5,271.1 L1203.0,271.2 L1203.5,271.4 L1204.0,271.5 L1204.5,271.7 L1205.0,271.7 L1205.5,271.8 L1206.0,271.9 L1206.5,271.9 L1207.0,271.9 L1207.5,271.7 L1208.0,271.5 L1208.5,271.5 L1209.0,271.5 L1209.5,271.3 L1210.0,271.5 L1210.5,271.6 L1211.0,271.7 L1211.5,271.9 L1211.5,284.8 Z" fill="#99c5f0"/><line x1="216" y1="265.5" x2="1224" y2="265.5" stroke="#ec6a6a" stroke-width="0.9" stroke-dasharray="1.8,1.2"/><line x1="266.0" y1="286" x2="266.0" y2="290" stroke="#dcdfe3" stroke-width="1"/><line x1="331.6" y1="286" x2="331.6" y2="290" stroke="#dcdfe3" stroke-width="1"/><line x1="397.3" y1="286" x2="397.3" y2="290" stroke="#dcdfe3" stroke-width="1"/><line x1="463.0" y1="286" x2="463.0" y2="290" stroke="#dcdfe3" stroke-width="1"/><line x1="528.6" y1="286" x2="528.6" y2="290" stroke="#dcdfe3" stroke-width="1"/><line x1="594.2" y1="286" x2="594.2" y2="290" stroke="#dcdfe3" stroke-width="1"/><line x1="659.9" y1="286" x2="659.9" y2="290" stroke="#dcdfe3" stroke-width="1"/><line x1="725.6" y1="286" x2="725.6" y2="290" stroke="#dcdfe3" stroke-width="1"/><line x1="791.2" y1="286" x2="791.2" y2="290" stroke="#dcdfe3" stroke-width="1"/><line x1="856.9" y1="286" x2="856.9" y2="290" stroke="#dcdfe3" stroke-width="1"/><line x1="922.5" y1="286" x2="922.5" y2="290" stroke="#dcdfe3" stroke-width="1"/><line x1="988.2" y1="286" x2="988.2" y2="290" stroke="#dcdfe3" stroke-width="1"/><line x1="1053.8" y1="286" x2="1053.8" y2="290" stroke="#dcdfe3" stroke-width="1"/><line x1="1119.5" y1="286" x2="1119.5" y2="290" stroke="#dcdfe3" stroke-width="1"/><line x1="1185.1" y1="286" x2="1185.1" y2="290" stroke="#dcdfe3" stroke-width="1"/></svg>
<div class="a t" style="left:236.0px;width:60px;text-align:center;top:291px;font-size:8px;color:#888;-webkit-text-stroke:0.1px #888">12. Jul</div>
<div class="a t" style="left:301.6px;width:60px;text-align:center;top:291px;font-size:8px;color:#888;-webkit-text-stroke:0.1px #888">14. Jul</div>
<div class="a t" style="left:367.3px;width:60px;text-align:center;top:291px;font-size:8px;color:#888;-webkit-text-stroke:0.1px #888">16. Jul</div>
<div class="a t" style="left:433.0px;width:60px;text-align:center;top:291px;font-size:8px;color:#888;-webkit-text-stroke:0.1px #888">18. Jul</div>
<div class="a t" style="left:498.6px;width:60px;text-align:center;top:291px;font-size:8px;color:#888;-webkit-text-stroke:0.1px #888">20. Jul</div>
<div class="a t" style="left:564.2px;width:60px;text-align:center;top:291px;font-size:8px;color:#888;-webkit-text-stroke:0.1px #888">22. Jul</div>
<div class="a t" style="left:629.9px;width:60px;text-align:center;top:291px;font-size:8px;color:#888;-webkit-text-stroke:0.1px #888">24. Jul</div>
<div class="a t" style="left:695.6px;width:60px;text-align:center;top:291px;font-size:8px;color:#888;-webkit-text-stroke:0.1px #888">26. Jul</div>
<div class="a t" style="left:761.2px;width:60px;text-align:center;top:291px;font-size:8px;color:#888;-webkit-text-stroke:0.1px #888">28. Jul</div>
<div class="a t" style="left:826.9px;width:60px;text-align:center;top:291px;font-size:8px;color:#888;-webkit-text-stroke:0.1px #888">30. Jul</div>
<div class="a t" style="left:892.5px;width:60px;text-align:center;top:291px;font-size:8px;color:#888;-webkit-text-stroke:0.1px #888">1. Aug</div>
<div class="a t" style="left:958.2px;width:60px;text-align:center;top:291px;font-size:8px;color:#888;-webkit-text-stroke:0.1px #888">3. Aug</div>
<div class="a t" style="left:1023.8px;width:60px;text-align:center;top:291px;font-size:8px;color:#888;-webkit-text-stroke:0.1px #888">5. Aug</div>
<div class="a t" style="left:1089.5px;width:60px;text-align:center;top:291px;font-size:8px;color:#888;-webkit-text-stroke:0.1px #888">7. Aug</div>
<div class="a t" style="left:1155.1px;width:60px;text-align:center;top:291px;font-size:8px;color:#888;-webkit-text-stroke:0.1px #888">9. Aug</div>
<div class="a t" style="left:1143px;top:257px;width:73px;height:15px;background:#f8d3d1;font-size:9.3px;color:#c43c3c;text-align:center;padding-top:3.5px">95% · 1,781,797</div>
<div class="card" style="left:173px;top:327px;width:1071px;height:390px"></div>
<div class="a t" style="left:188.7px;top:343.5px;font-size:13px;color:#333">Performance &amp; traffic</div>
<div class="a" style="left:175.5px;top:372px;width:1066px;height:341px;border:1px solid #e4e7ec"></div>
<div class="a" style="left:176px;top:542.5px;width:1065px;height:1px;background:#e4e7ec"></div>
<div class="a" style="left:442.0px;top:372px;width:1px;height:341px;background:#e4e7ec"></div>
<div class="a" style="left:708.5px;top:372px;width:1px;height:341px;background:#e4e7ec"></div>
<div class="a" style="left:975.0px;top:372px;width:1px;height:341px;background:#e4e7ec"></div>
<div class="a t" style="left:191.8px;top:392px;font-size:10px;color:#333">Cached &amp; total bandwidth</div>
<svg style="left:311.7px;top:392.5px" width="8" height="8" viewBox="0 0 8 8"><circle cx="4" cy="4" r="4" fill="#5e6a77"/><rect x="3.4" y="3.3" width="1.2" height="3" fill="#fff"/><circle cx="4" cy="2.1" r="0.7" fill="#fff"/></svg>
<div class="a t" style="left:191.8px;top:410px;font-size:12.5px;color:#222">492.55 GB</div>
<div class="a t" style="left:258px;top:411px;font-size:9.7px;color:#555">(of 1.92 TB)</div>
<div class="a t" style="left:317.6px;top:407px;width:37px;height:17px;background:#d4efe2;color:#2f8a60;font-size:9px;text-align:center;padding-top:4.3px"><svg style="position:relative;display:inline-block;vertical-align:top;margin-top:0.3px;margin-right:1px" width="7" height="8.5" viewBox="0 0 7 8.5"><path d="M3.5,8 V1.3 M0.8,4 L3.5,1.2 L6.2,4" fill="none" stroke="#2f8a60" stroke-width="1.1"/></svg>+12%</div>
<svg style="left:0;top:0" width="1256" height="849"><line x1="233.5" y1="440.5" x2="425.3" y2="440.5" stroke="#eceef1" stroke-width="1"/><line x1="233.5" y1="459.5" x2="425.3" y2="459.5" stroke="#eceef1" stroke-width="1"/><line x1="233.5" y1="479" x2="425.3" y2="479" stroke="#eceef1" stroke-width="1"/><line x1="233.5" y1="498" x2="425.3" y2="498" stroke="#eceef1" stroke-width="1"/><path d="M234.5,498.0 L234.5,497.6 L237.6,497.0 L240.8,496.4 L243.9,495.8 L247.1,495.2 L250.2,494.6 L253.4,494.0 L256.5,493.4 L259.7,492.8 L262.8,492.2 L266.0,491.6 L269.1,491.0 L272.3,490.4 L275.4,489.8 L278.6,489.2 L281.7,488.6 L284.8,488.0 L288.0,487.4 L291.1,486.5 L294.3,485.7 L297.4,484.8 L300.6,483.9 L303.7,483.1 L306.9,482.2 L310.0,481.3 L313.2,480.5 L316.3,479.6 L319.5,478.7 L322.6,477.9 L325.8,477.0 L328.9,476.1 L332.0,475.3 L335.2,474.4 L338.3,473.5 L341.5,472.6 L344.6,471.8 L347.8,470.9 L350.9,470.0 L354.1,469.2 L357.2,468.3 L360.4,467.4 L363.5,466.6 L366.7,465.7 L369.8,464.8 L373.0,464.0 L376.1,463.0 L379.2,462.0 L382.4,461.0 L385.5,460.0 L388.7,459.0 L391.8,458.0 L395.0,457.0 L398.1,456.0 L401.3,455.0 L404.4,454.0 L407.6,453.0 L410.7,452.5 L413.9,452.1 L417.0,451.6 L420.2,451.1 L423.3,450.6 L423.3,498.0 Z" fill="#c9ebdc" stroke="none" stroke-width="0" stroke-linejoin="round"/><path d="M234.5,498.0 L234.5,497.6 L237.6,497.4 L240.8,497.2 L243.9,497.0 L247.1,496.7 L250.2,496.5 L253.4,496.3 L256.5,496.1 L259.7,495.9 L262.8,495.7 L266.0,495.5 L269.1,495.3 L272.3,495.0 L275.4,494.8 L278.6,494.6 L281.7,494.4 L284.8,494.2 L288.0,494.0 L291.1,493.8 L294.3,493.6 L297.4,493.4 L300.6,493.3 L303.7,493.1 L306.9,492.9 L310.0,492.7 L313.2,492.5 L316.3,492.4 L319.5,492.2 L322.6,492.0 L325.8,491.8 L328.9,491.6 L332.0,491.5 L335.2,491.3 L338.3,491.1 L341.5,491.0 L344.6,490.8 L347.8,490.6 L350.9,490.5 L354.1,490.3 L357.2,490.2 L360.4,490.0 L363.5,489.8 L366.7,489.7 L369.8,489.5 L373.0,489.4 L376.1,489.2 L379.2,489.0 L382.4,488.8 L385.5,488.6 L388.7,488.4 L391.8,488.1 L395.0,487.9 L398.1,487.7 L401.3,487.4 L404.4,487.2 L407.6,487.0 L410.7,486.7 L413.9,486.5 L417.0,486.3 L420.2,486.0 L423.3,485.8 L423.3,498.0 Z" fill="#9fd7bd" stroke="none" stroke-width="0" stroke-linejoin="round"/><path d="M234.5,497.6 L237.6,497.4 L240.8,497.2 L243.9,497.0 L247.1,496.7 L250.2,496.5 L253.4,496.3 L256.5,496.1 L259.7,495.9 L262.8,495.7 L266.0,495.5 L269.1,495.3 L272.3,495.0 L275.4,494.8 L278.6,494.6 L281.7,494.4 L284.8,494.2 L288.0,494.0 L291.1,493.8 L294.3,493.6 L297.4,493.4 L300.6,493.3 L303.7,493.1 L306.9,492.9 L310.0,492.7 L313.2,492.5 L316.3,492.4 L319.5,492.2 L322.6,492.0 L325.8,491.8 L328.9,491.6 L332.0,491.5 L335.2,491.3 L338.3,491.1 L341.5,491.0 L344.6,490.8 L347.8,490.6 L350.9,490.5 L354.1,490.3 L357.2,490.2 L360.4,490.0 L363.5,489.8 L366.7,489.7 L369.8,489.5 L373.0,489.4 L376.1,489.2 L379.2,489.0 L382.4,488.8 L385.5,488.6 L388.7,488.4 L391.8,488.1 L395.0,487.9 L398.1,487.7 L401.3,487.4 L404.4,487.2 L407.6,487.0 L410.7,486.7 L413.9,486.5 L417.0,486.3 L420.2,486.0 L423.3,485.8" fill="none" stroke="#3a9a6d" stroke-width="1" stroke-linejoin="round"/></svg>
<div class="a t" style="right:1033.0px;top:436.5px;font-size:7.6px;color:#888;text-align:right;-webkit-text-stroke:0.1px #888">2.3 TB</div>
<div class="a t" style="right:1033.0px;top:455.3px;font-size:7.6px;color:#888;text-align:right;-webkit-text-stroke:0.1px #888">1.6 TB</div>
<div class="a t" style="right:1033.0px;top:475px;font-size:7.6px;color:#888;text-align:right;-webkit-text-stroke:0.1px #888">800 GB</div>
<div class="a t" style="right:1033.0px;top:493.6px;font-size:7.6px;color:#888;text-align:right;-webkit-text-stroke:0.1px #888">0 B</div>
<div class="a t" style="left:222.5px;width:40px;text-align:center;top:503.5px;font-size:7.6px;color:#888;-webkit-text-stroke:0.1px #888">12. Jul</div>
<div class="a t" style="left:265.5px;width:40px;text-align:center;top:503.5px;font-size:7.6px;color:#888;-webkit-text-stroke:0.1px #888">19. Jul</div>
<div class="a t" style="left:308.4px;width:40px;text-align:center;top:503.5px;font-size:7.6px;color:#888;-webkit-text-stroke:0.1px #888">26. Jul</div>
<div class="a t" style="left:351.4px;width:40px;text-align:center;top:503.5px;font-size:7.6px;color:#888;-webkit-text-stroke:0.1px #888">2. Aug</div>
<div class="a t" style="left:394.4px;width:40px;text-align:center;top:503.5px;font-size:7.6px;color:#888;-webkit-text-stroke:0.1px #888">9. Aug</div>
<div class="a" style="left:204.0px;top:525px;width:8px;height:8px;background:#a8dcc5;border-radius:1px"></div>
<div class="a t" style="left:215px;top:524.7px;font-size:8.3px;color:#888">Total BW</div>
<div class="a" style="left:261.0px;top:525px;width:8px;height:8px;background:#2e8a5e;border-radius:1px"></div>
<div class="a t" style="left:272.3px;top:524.7px;font-size:8.3px;color:#888">Cached</div>
<svg style="left:412px;top:525px" width="11" height="10" viewBox="0 0 11 10"><path d="M4.2,0 H6.8 V4 H9 L5.5,7.3 L2,4 H4.2 Z" fill="#333"/><rect x="0" y="8" width="11" height="1.6" fill="#333"/></svg>
<div class="a t" style="left:458px;top:392px;font-size:10px;color:#333">Cached bandwidth rate</div>
<svg style="left:566.7px;top:392.5px" width="8" height="8" viewBox="0 0 8 8"><circle cx="4" cy="4" r="4" fill="#5e6a77"/><rect x="3.4" y="3.3" width="1.2" height="3" fill="#fff"/><circle cx="4" cy="2.1" r="0.7" fill="#fff"/></svg>
<div class="a t" style="left:458px;top:410px;font-size:12.5px;color:#222">25%</div>
<div class="a t" style="left:490px;top:407px;width:43px;height:17px;background:#d4efe2;color:#2f8a60;font-size:9px;text-align:center;padding-top:4.3px"><svg style="position:relative;display:inline-block;vertical-align:top;margin-top:0.3px;margin-right:1px" width="7" height="8.5" viewBox="0 0 7 8.5"><path d="M3.5,8 V1.3 M0.8,4 L3.5,1.2 L6.2,4" fill="none" stroke="#2f8a60" stroke-width="1.1"/></svg>+174%</div>
<svg style="left:0;top:0" width="1256" height="849"><line x1="493.8" y1="440.5" x2="690.9" y2="440.5" stroke="#eceef1" stroke-width="1"/><line x1="493.8" y1="469.2" x2="690.9" y2="469.2" stroke="#eceef1" stroke-width="1"/><line x1="493.8" y1="498" x2="690.9" y2="498" stroke="#eceef1" stroke-width="1"/><path d="M494.8,498.0 L494.8,487.5 L496.2,486.8 L497.6,485.4 L499.0,485.7 L500.4,486.6 L501.8,486.8 L503.2,484.9 L504.6,481.9 L506.0,480.6 L507.4,479.2 L508.8,480.5 L510.2,482.5 L511.6,483.4 L513.0,482.9 L514.3,483.3 L515.7,484.2 L517.1,484.3 L518.5,482.7 L519.9,481.3 L521.3,480.8 L522.7,481.1 L524.1,481.3 L525.5,481.5 L526.9,481.3 L528.3,481.8 L529.7,483.3 L531.1,483.5 L532.5,482.9 L533.9,482.4 L535.3,483.8 L536.7,485.6 L538.1,486.6 L539.5,487.5 L540.9,488.4 L542.3,488.7 L543.7,487.7 L545.1,487.3 L546.5,486.5 L547.9,485.7 L549.3,485.2 L550.7,481.9 L552.1,478.7 L553.4,479.9 L554.8,481.8 L556.2,481.5 L557.6,480.2 L559.0,480.0 L560.4,482.2 L561.8,483.4 L563.2,482.5 L564.6,481.4 L566.0,482.4 L567.4,483.4 L568.8,484.4 L570.2,483.5 L571.6,483.4 L573.0,483.3 L574.4,483.7 L575.8,484.5 L577.2,484.9 L578.6,484.6 L580.0,484.7 L581.4,485.5 L582.8,486.6 L584.2,487.6 L585.6,487.8 L587.0,489.0 L588.4,487.2 L589.8,486.5 L591.2,484.7 L592.5,484.8 L593.9,484.2 L595.3,483.7 L596.7,481.1 L598.1,478.7 L599.5,480.6 L600.9,482.9 L602.3,483.1 L603.7,482.9 L605.1,482.7 L606.5,483.4 L607.9,484.1 L609.3,483.9 L610.7,482.4 L612.1,482.8 L613.5,483.4 L614.9,485.0 L616.3,484.0 L617.7,483.6 L619.1,483.2 L620.5,483.6 L621.9,484.6 L623.3,484.5 L624.7,485.6 L626.1,486.7 L627.5,487.1 L628.9,487.1 L630.3,487.0 L631.6,485.9 L633.0,486.6 L634.4,487.1 L635.8,488.4 L637.2,489.6 L638.6,491.4 L640.0,488.1 L641.4,484.0 L642.8,479.2 L644.2,475.8 L645.6,476.6 L647.0,480.6 L648.4,483.4 L649.8,480.7 L651.2,479.8 L652.6,481.0 L654.0,481.6 L655.4,480.7 L656.8,480.8 L658.2,481.2 L659.6,482.4 L661.0,482.7 L662.4,482.4 L663.8,482.0 L665.2,482.0 L666.6,482.8 L668.0,482.5 L669.4,482.6 L670.7,482.6 L672.1,483.3 L673.5,484.4 L674.9,484.2 L676.3,483.8 L677.7,483.3 L679.1,482.8 L680.5,483.0 L681.9,483.8 L683.3,481.4 L684.7,479.1 L686.1,479.9 L687.5,481.2 L688.9,486.8 L688.9,498.0 Z" fill="#a6c0f5" stroke="none" stroke-width="0" stroke-linejoin="round"/><path d="M494.8,487.5 L496.2,486.8 L497.6,485.4 L499.0,485.7 L500.4,486.6 L501.8,486.8 L503.2,484.9 L504.6,481.9 L506.0,480.6 L507.4,479.2 L508.8,480.5 L510.2,482.5 L511.6,483.4 L513.0,482.9 L514.3,483.3 L515.7,484.2 L517.1,484.3 L518.5,482.7 L519.9,481.3 L521.3,480.8 L522.7,481.1 L524.1,481.3 L525.5,481.5 L526.9,481.3 L528.3,481.8 L529.7,483.3 L531.1,483.5 L532.5,482.9 L533.9,482.4 L535.3,483.8 L536.7,485.6 L538.1,486.6 L539.5,487.5 L540.9,488.4 L542.3,488.7 L543.7,487.7 L545.1,487.3 L546.5,486.5 L547.9,485.7 L549.3,485.2 L550.7,481.9 L552.1,478.7 L553.4,479.9 L554.8,481.8 L556.2,481.5 L557.6,480.2 L559.0,480.0 L560.4,482.2 L561.8,483.4 L563.2,482.5 L564.6,481.4 L566.0,482.4 L567.4,483.4 L568.8,484.4 L570.2,483.5 L571.6,483.4 L573.0,483.3 L574.4,483.7 L575.8,484.5 L577.2,484.9 L578.6,484.6 L580.0,484.7 L581.4,485.5 L582.8,486.6 L584.2,487.6 L585.6,487.8 L587.0,489.0 L588.4,487.2 L589.8,486.5 L591.2,484.7 L592.5,484.8 L593.9,484.2 L595.3,483.7 L596.7,481.1 L598.1,478.7 L599.5,480.6 L600.9,482.9 L602.3,483.1 L603.7,482.9 L605.1,482.7 L606.5,483.4 L607.9,484.1 L609.3,483.9 L610.7,482.4 L612.1,482.8 L613.5,483.4 L614.9,485.0 L616.3,484.0 L617.7,483.6 L619.1,483.2 L620.5,483.6 L621.9,484.6 L623.3,484.5 L624.7,485.6 L626.1,486.7 L627.5,487.1 L628.9,487.1 L630.3,487.0 L631.6,485.9 L633.0,486.6 L634.4,487.1 L635.8,488.4 L637.2,489.6 L638.6,491.4 L640.0,488.1 L641.4,484.0 L642.8,479.2 L644.2,475.8 L645.6,476.6 L647.0,480.6 L648.4,483.4 L649.8,480.7 L651.2,479.8 L652.6,481.0 L654.0,481.6 L655.4,480.7 L656.8,480.8 L658.2,481.2 L659.6,482.4 L661.0,482.7 L662.4,482.4 L663.8,482.0 L665.2,482.0 L666.6,482.8 L668.0,482.5 L669.4,482.6 L670.7,482.6 L672.1,483.3 L673.5,484.4 L674.9,484.2 L676.3,483.8 L677.7,483.3 L679.1,482.8 L680.5,483.0 L681.9,483.8 L683.3,481.4 L684.7,479.1 L686.1,479.9 L687.5,481.2 L688.9,486.8" fill="none" stroke="#4f76dc" stroke-width="1" stroke-linejoin="round"/></svg>
<div class="a t" style="right:772.7px;top:436.5px;font-size:7.6px;color:#888;text-align:right;-webkit-text-stroke:0.1px #888">100%</div>
<div class="a t" style="right:772.7px;top:465.2px;font-size:7.6px;color:#888;text-align:right;-webkit-text-stroke:0.1px #888">50%</div>
<div class="a t" style="right:772.7px;top:493.6px;font-size:7.6px;color:#888;text-align:right;-webkit-text-stroke:0.1px #888">0%</div>
<div class="a t" style="left:483.0px;width:40px;text-align:center;top:503.5px;font-size:7.6px;color:#888;-webkit-text-stroke:0.1px #888">12. Jul</div>
<div class="a t" style="left:527.2px;width:40px;text-align:center;top:503.5px;font-size:7.6px;color:#888;-webkit-text-stroke:0.1px #888">19. Jul</div>
<div class="a t" style="left:571.4px;width:40px;text-align:center;top:503.5px;font-size:7.6px;color:#888;-webkit-text-stroke:0.1px #888">26. Jul</div>
<div class="a t" style="left:615.6px;width:40px;text-align:center;top:503.5px;font-size:7.6px;color:#888;-webkit-text-stroke:0.1px #888">2. Aug</div>
<div class="a t" style="left:659.7px;width:40px;text-align:center;top:503.5px;font-size:7.6px;color:#888;-webkit-text-stroke:0.1px #888">9. Aug</div>
<div class="a" style="left:469.5px;top:525px;width:8px;height:8px;background:#1a3fb5;border-radius:1px"></div>
<div class="a t" style="left:480.8px;top:524.7px;font-size:8.3px;color:#888">Static only</div>
<div class="a" style="left:534.1px;top:525px;width:8px;height:8px;background:#5a86ea;border-radius:1px"></div>
<div class="a t" style="left:545.5px;top:524.7px;font-size:8.3px;color:#888">Total cached</div>
<svg style="left:678.5px;top:525px" width="11" height="10" viewBox="0 0 11 10"><path d="M4.2,0 H6.8 V4 H9 L5.5,7.3 L2,4 H4.2 Z" fill="#333"/><rect x="0" y="8" width="11" height="1.6" fill="#333"/></svg>
<div class="a t" style="left:724.7px;top:392px;font-size:10px;color:#333">Cached requests</div>
<svg style="left:804px;top:392.5px" width="8" height="8" viewBox="0 0 8 8"><circle cx="4" cy="4" r="4" fill="#5e6a77"/><rect x="3.4" y="3.3" width="1.2" height="3" fill="#fff"/><circle cx="4" cy="2.1" r="0.7" fill="#fff"/></svg>
<div class="a t" style="left:724.7px;top:410px;font-size:12.5px;color:#222">25 M</div>
<div class="a t" style="left:758.5px;top:411px;font-size:9.7px;color:#555">(8% of total)</div>
<div class="a t" style="left:822.6px;top:407px;width:32px;height:17px;background:#d4efe2;color:#2f8a60;font-size:9px;text-align:center;padding-top:4.3px"><svg style="position:relative;display:inline-block;vertical-align:top;margin-top:0.3px;margin-right:1px" width="7" height="8.5" viewBox="0 0 7 8.5"><path d="M3.5,8 V1.3 M0.8,4 L3.5,1.2 L6.2,4" fill="none" stroke="#2f8a60" stroke-width="1.1"/></svg>+2%</div>
<svg style="left:0;top:0" width="1256" height="849"><line x1="759.4" y1="440.5" x2="958.2" y2="440.5" stroke="#eceef1" stroke-width="1"/><line x1="759.4" y1="459.2" x2="958.2" y2="459.2" stroke="#eceef1" stroke-width="1"/><line x1="759.4" y1="478.3" x2="958.2" y2="478.3" stroke="#eceef1" stroke-width="1"/><line x1="759.4" y1="498" x2="958.2" y2="498" stroke="#eceef1" stroke-width="1"/><path d="M760.4,498.0 L760.4,497.6 L761.5,491.8 L762.6,487.1 L763.7,487.1 L764.8,487.1 L765.9,487.1 L767.0,487.1 L768.1,487.1 L769.2,485.4 L770.2,480.7 L771.3,476.0 L772.4,471.3 L773.5,466.6 L774.6,468.6 L775.7,472.1 L776.8,475.5 L777.9,477.9 L779.0,475.6 L780.1,473.2 L781.2,474.9 L782.3,477.5 L783.4,480.2 L784.5,481.7 L785.6,477.9 L786.7,474.2 L787.7,471.1 L788.8,474.3 L789.9,477.5 L791.0,476.9 L792.1,475.0 L793.2,473.7 L794.3,475.3 L795.4,476.9 L796.5,478.6 L797.6,478.8 L798.7,478.9 L799.8,479.0 L800.9,479.1 L802.0,479.9 L803.1,482.1 L804.2,484.3 L805.2,486.5 L806.3,486.2 L807.4,484.9 L808.5,484.6 L809.6,484.4 L810.7,484.3 L811.8,484.1 L812.9,483.9 L814.0,483.8 L815.1,481.6 L816.2,477.6 L817.3,473.7 L818.4,469.7 L819.5,471.7 L820.6,474.4 L821.7,477.2 L822.7,477.2 L823.8,475.2 L824.9,473.3 L826.0,473.5 L827.1,475.7 L828.2,477.9 L829.3,477.2 L830.4,475.6 L831.5,474.1 L832.6,474.5 L833.7,476.7 L834.8,478.9 L835.9,481.0 L837.0,479.1 L838.1,476.5 L839.2,473.9 L840.3,475.6 L841.3,478.5 L842.4,481.2 L843.5,479.4 L844.6,477.5 L845.7,475.6 L846.8,477.3 L847.9,480.1 L849.0,482.8 L850.1,484.0 L851.2,484.5 L852.3,485.0 L853.4,485.4 L854.5,485.9 L855.6,486.4 L856.7,486.4 L857.8,485.4 L858.8,484.4 L859.9,483.4 L861.0,480.7 L862.1,477.0 L863.2,473.3 L864.3,469.6 L865.4,470.5 L866.5,473.7 L867.6,477.0 L868.7,475.6 L869.8,472.7 L870.9,470.8 L872.0,473.1 L873.1,475.3 L874.2,477.6 L875.3,476.6 L876.3,475.4 L877.4,474.2 L878.5,475.2 L879.6,477.5 L880.7,479.7 L881.8,479.3 L882.9,476.7 L884.0,474.2 L885.1,476.5 L886.2,479.8 L887.3,482.6 L888.4,481.1 L889.5,479.7 L890.6,479.7 L891.7,482.1 L892.8,484.6 L893.9,487.0 L894.9,487.6 L896.0,487.6 L897.1,487.5 L898.2,487.4 L899.3,487.4 L900.4,487.3 L901.5,487.2 L902.6,487.1 L903.7,486.6 L904.8,485.7 L905.9,484.9 L907.0,478.7 L908.1,471.2 L909.2,463.8 L910.3,463.0 L911.4,467.8 L912.4,472.5 L913.5,477.3 L914.6,475.4 L915.7,472.9 L916.8,470.3 L917.9,472.3 L919.0,475.5 L920.1,478.2 L921.2,476.5 L922.3,474.9 L923.4,474.4 L924.5,476.2 L925.6,478.1 L926.7,477.4 L927.8,475.2 L928.9,473.0 L929.9,470.8 L931.0,473.3 L932.1,475.8 L933.2,477.3 L934.3,475.3 L935.4,473.3 L936.5,473.8 L937.6,476.6 L938.7,479.4 L939.8,482.2 L940.9,485.0 L942.0,485.1 L943.1,485.1 L944.2,485.1 L945.3,485.1 L946.4,484.6 L947.4,483.3 L948.5,482.1 L949.6,480.5 L950.7,478.8 L951.8,477.0 L952.9,475.3 L954.0,474.4 L955.1,478.5 L956.2,482.6 L956.2,498.0 Z" fill="#a6c0f5" stroke="none" stroke-width="0" stroke-linejoin="round"/><path d="M760.4,497.6 L761.5,491.8 L762.6,487.1 L763.7,487.1 L764.8,487.1 L765.9,487.1 L767.0,487.1 L768.1,487.1 L769.2,485.4 L770.2,480.7 L771.3,476.0 L772.4,471.3 L773.5,466.6 L774.6,468.6 L775.7,472.1 L776.8,475.5 L777.9,477.9 L779.0,475.6 L780.1,473.2 L781.2,474.9 L782.3,477.5 L783.4,480.2 L784.5,481.7 L785.6,477.9 L786.7,474.2 L787.7,471.1 L788.8,474.3 L789.9,477.5 L791.0,476.9 L792.1,475.0 L793.2,473.7 L794.3,475.3 L795.4,476.9 L796.5,478.6 L797.6,478.8 L798.7,478.9 L799.8,479.0 L800.9,479.1 L802.0,479.9 L803.1,482.1 L804.2,484.3 L805.2,486.5 L806.3,486.2 L807.4,484.9 L808.5,484.6 L809.6,484.4 L810.7,484.3 L811.8,484.1 L812.9,483.9 L814.0,483.8 L815.1,481.6 L816.2,477.6 L817.3,473.7 L818.4,469.7 L819.5,471.7 L820.6,474.4 L821.7,477.2 L822.7,477.2 L823.8,475.2 L824.9,473.3 L826.0,473.5 L827.1,475.7 L828.2,477.9 L829.3,477.2 L830.4,475.6 L831.5,474.1 L832.6,474.5 L833.7,476.7 L834.8,478.9 L835.9,481.0 L837.0,479.1 L838.1,476.5 L839.2,473.9 L840.3,475.6 L841.3,478.5 L842.4,481.2 L843.5,479.4 L844.6,477.5 L845.7,475.6 L846.8,477.3 L847.9,480.1 L849.0,482.8 L850.1,484.0 L851.2,484.5 L852.3,485.0 L853.4,485.4 L854.5,485.9 L855.6,486.4 L856.7,486.4 L857.8,485.4 L858.8,484.4 L859.9,483.4 L861.0,480.7 L862.1,477.0 L863.2,473.3 L864.3,469.6 L865.4,470.5 L866.5,473.7 L867.6,477.0 L868.7,475.6 L869.8,472.7 L870.9,470.8 L872.0,473.1 L873.1,475.3 L874.2,477.6 L875.3,476.6 L876.3,475.4 L877.4,474.2 L878.5,475.2 L879.6,477.5 L880.7,479.7 L881.8,479.3 L882.9,476.7 L884.0,474.2 L885.1,476.5 L886.2,479.8 L887.3,482.6 L888.4,481.1 L889.5,479.7 L890.6,479.7 L891.7,482.1 L892.8,484.6 L893.9,487.0 L894.9,487.6 L896.0,487.6 L897.1,487.5 L898.2,487.4 L899.3,487.4 L900.4,487.3 L901.5,487.2 L902.6,487.1 L903.7,486.6 L904.8,485.7 L905.9,484.9 L907.0,478.7 L908.1,471.2 L909.2,463.8 L910.3,463.0 L911.4,467.8 L912.4,472.5 L913.5,477.3 L914.6,475.4 L915.7,472.9 L916.8,470.3 L917.9,472.3 L919.0,475.5 L920.1,478.2 L921.2,476.5 L922.3,474.9 L923.4,474.4 L924.5,476.2 L925.6,478.1 L926.7,477.4 L927.8,475.2 L928.9,473.0 L929.9,470.8 L931.0,473.3 L932.1,475.8 L933.2,477.3 L934.3,475.3 L935.4,473.3 L936.5,473.8 L937.6,476.6 L938.7,479.4 L939.8,482.2 L940.9,485.0 L942.0,485.1 L943.1,485.1 L944.2,485.1 L945.3,485.1 L946.4,484.6 L947.4,483.3 L948.5,482.1 L949.6,480.5 L950.7,478.8 L951.8,477.0 L952.9,475.3 L954.0,474.4 L955.1,478.5 L956.2,482.6" fill="none" stroke="#4f76dc" stroke-width="1" stroke-linejoin="round"/></svg>
<div class="a t" style="right:507.1px;top:436.5px;font-size:7.6px;color:#888;text-align:right;-webkit-text-stroke:0.1px #888">750k</div>
<div class="a t" style="right:507.1px;top:455.2px;font-size:7.6px;color:#888;text-align:right;-webkit-text-stroke:0.1px #888">500k</div>
<div class="a t" style="right:507.1px;top:474.3px;font-size:7.6px;color:#888;text-align:right;-webkit-text-stroke:0.1px #888">250k</div>
<div class="a t" style="right:507.1px;top:493.6px;font-size:7.6px;color:#888;text-align:right;-webkit-text-stroke:0.1px #888">0</div>
<div class="a t" style="left:748.7px;width:40px;text-align:center;top:503.5px;font-size:7.6px;color:#888;-webkit-text-stroke:0.1px #888">12. Jul</div>
<div class="a t" style="left:793.3px;width:40px;text-align:center;top:503.5px;font-size:7.6px;color:#888;-webkit-text-stroke:0.1px #888">19. Jul</div>
<div class="a t" style="left:837.8px;width:40px;text-align:center;top:503.5px;font-size:7.6px;color:#888;-webkit-text-stroke:0.1px #888">26. Jul</div>
<div class="a t" style="left:882.4px;width:40px;text-align:center;top:503.5px;font-size:7.6px;color:#888;-webkit-text-stroke:0.1px #888">2. Aug</div>
<div class="a t" style="left:927.0px;width:40px;text-align:center;top:503.5px;font-size:7.6px;color:#888;-webkit-text-stroke:0.1px #888">9. Aug</div>
<div class="a" style="left:736.1px;top:525px;width:8px;height:8px;background:#1a3fb5;border-radius:1px"></div>
<div class="a t" style="left:747.5px;top:524.7px;font-size:8.3px;color:#888">Static only</div>
<div class="a" style="left:801.0px;top:525px;width:8px;height:8px;background:#5a86ea;border-radius:1px"></div>
<div class="a t" style="left:812.5px;top:524.7px;font-size:8.3px;color:#888">Total cached</div>
<svg style="left:944.5px;top:525px" width="11" height="10" viewBox="0 0 11 10"><path d="M4.2,0 H6.8 V4 H9 L5.5,7.3 L2,4 H4.2 Z" fill="#333"/><rect x="0" y="8" width="11" height="1.6" fill="#333"/></svg>
<div class="a t" style="left:991.8px;top:392px;font-size:10px;color:#333">Total hits</div>
<svg style="left:1036.6px;top:392.5px" width="8" height="8" viewBox="0 0 8 8"><circle cx="4" cy="4" r="4" fill="#5e6a77"/><rect x="3.4" y="3.3" width="1.2" height="3" fill="#fff"/><circle cx="4" cy="2.1" r="0.7" fill="#fff"/></svg>
<div class="a t" style="left:991.8px;top:410px;font-size:12.5px;color:#222">295.08 M</div>
<div class="a t" style="left:1050.7px;top:411px;font-size:9.2px;font-weight:700;color:#555">Avg. hits / sec 111</div>
<div class="a t" style="left:1137px;top:407px;width:32px;height:17px;background:#d4efe2;color:#2f8a60;font-size:9px;text-align:center;padding-top:4.3px"><svg style="position:relative;display:inline-block;vertical-align:top;margin-top:0.3px;margin-right:1px" width="7" height="8.5" viewBox="0 0 7 8.5"><path d="M3.5,8 V1.3 M0.8,4 L3.5,1.2 L6.2,4" fill="none" stroke="#2f8a60" stroke-width="1.1"/></svg>+2%</div>
<svg style="left:0;top:0" width="1256" height="849"><line x1="1022.8" y1="440.5" x2="1223.8" y2="440.5" stroke="#eceef1" stroke-width="1"/><line x1="1022.8" y1="469.2" x2="1223.8" y2="469.2" stroke="#eceef1" stroke-width="1"/><line x1="1022.8" y1="498" x2="1223.8" y2="498" stroke="#eceef1" stroke-width="1"/><path d="M1023.8,498.0 L1023.8,497.2 L1024.8,489.7 L1025.8,485.4 L1026.8,484.7 L1027.8,484.2 L1028.8,484.1 L1029.8,484.1 L1030.8,484.0 L1031.8,484.0 L1032.8,483.4 L1033.7,483.7 L1034.7,482.5 L1035.7,481.4 L1036.7,480.3 L1037.7,479.5 L1038.7,480.7 L1039.7,481.1 L1040.7,481.5 L1041.7,482.0 L1042.7,477.7 L1043.7,476.2 L1044.7,477.9 L1045.7,479.5 L1046.7,481.1 L1047.7,480.1 L1048.7,478.3 L1049.7,477.9 L1050.7,479.3 L1051.7,480.4 L1052.7,481.4 L1053.6,481.0 L1054.6,480.0 L1055.6,480.2 L1056.6,480.1 L1057.6,479.8 L1058.6,479.5 L1059.6,480.1 L1060.6,480.1 L1061.6,480.8 L1062.6,481.1 L1063.6,481.1 L1064.6,481.3 L1065.6,481.8 L1066.6,482.0 L1067.6,482.1 L1068.6,482.7 L1069.6,483.5 L1070.6,483.1 L1071.6,483.5 L1072.6,484.5 L1073.5,484.5 L1074.5,484.6 L1075.5,484.4 L1076.5,484.1 L1077.5,484.5 L1078.5,483.6 L1079.5,483.6 L1080.5,481.9 L1081.5,480.8 L1082.5,478.9 L1083.5,479.9 L1084.5,481.1 L1085.5,481.5 L1086.5,481.1 L1087.5,480.8 L1088.5,479.3 L1089.5,478.6 L1090.5,479.1 L1091.5,480.6 L1092.5,481.4 L1093.4,482.1 L1094.4,481.1 L1095.4,479.9 L1096.4,479.1 L1097.4,479.9 L1098.4,481.7 L1099.4,483.1 L1100.4,481.9 L1101.4,480.3 L1102.4,479.2 L1103.4,479.6 L1104.4,481.2 L1105.4,483.2 L1106.4,482.4 L1107.4,481.4 L1108.4,481.4 L1109.4,480.5 L1110.4,481.4 L1111.4,481.6 L1112.4,482.2 L1113.3,483.2 L1114.3,483.6 L1115.3,484.6 L1116.3,485.6 L1117.3,485.3 L1118.3,485.4 L1119.3,485.8 L1120.3,485.3 L1121.3,485.3 L1122.3,484.2 L1123.3,483.5 L1124.3,482.2 L1125.3,481.9 L1126.3,480.2 L1127.3,478.9 L1128.3,479.3 L1129.3,480.0 L1130.3,480.7 L1131.3,481.9 L1132.3,480.5 L1133.2,479.6 L1134.2,479.2 L1135.2,478.1 L1136.2,479.7 L1137.2,479.6 L1138.2,480.9 L1139.2,482.0 L1140.2,480.8 L1141.2,480.5 L1142.2,479.1 L1143.2,480.1 L1144.2,481.4 L1145.2,482.2 L1146.2,481.7 L1147.2,480.5 L1148.2,480.1 L1149.2,480.9 L1150.2,481.4 L1151.2,481.8 L1152.2,482.9 L1153.1,482.4 L1154.1,481.8 L1155.1,481.4 L1156.1,481.5 L1157.1,481.6 L1158.1,482.3 L1159.1,483.9 L1160.1,484.4 L1161.1,485.6 L1162.1,485.1 L1163.1,485.7 L1164.1,485.6 L1165.1,485.8 L1166.1,485.9 L1167.1,485.7 L1168.1,485.1 L1169.1,485.0 L1170.1,485.5 L1171.1,485.3 L1172.1,485.1 L1173.0,466.4 L1174.0,453.4 L1175.0,449.3 L1176.0,458.7 L1177.0,468.6 L1178.0,477.5 L1179.0,478.4 L1180.0,478.8 L1181.0,478.9 L1182.0,479.7 L1183.0,479.9 L1184.0,479.2 L1185.0,480.2 L1186.0,479.5 L1187.0,478.5 L1188.0,478.7 L1189.0,480.4 L1190.0,480.5 L1191.0,482.2 L1192.0,481.3 L1192.9,480.0 L1193.9,479.5 L1194.9,479.3 L1195.9,480.0 L1196.9,481.0 L1197.9,481.9 L1198.9,482.0 L1199.9,481.2 L1200.9,481.4 L1201.9,479.9 L1202.9,481.6 L1203.9,481.7 L1204.9,483.2 L1205.9,484.1 L1206.9,485.1 L1207.9,485.0 L1208.9,485.6 L1209.9,485.2 L1210.9,485.9 L1211.9,485.3 L1212.8,485.7 L1213.8,485.4 L1214.8,484.9 L1215.8,484.7 L1216.8,483.3 L1217.8,482.3 L1218.8,481.9 L1219.8,481.1 L1220.8,483.7 L1221.8,490.5 L1221.8,498.0 Z" fill="#d5dce6" stroke="none" stroke-width="0" stroke-linejoin="round"/><path d="M1023.8,497.2 L1024.8,489.7 L1025.8,485.4 L1026.8,484.7 L1027.8,484.2 L1028.8,484.1 L1029.8,484.1 L1030.8,484.0 L1031.8,484.0 L1032.8,483.4 L1033.7,483.7 L1034.7,482.5 L1035.7,481.4 L1036.7,480.3 L1037.7,479.5 L1038.7,480.7 L1039.7,481.1 L1040.7,481.5 L1041.7,482.0 L1042.7,477.7 L1043.7,476.2 L1044.7,477.9 L1045.7,479.5 L1046.7,481.1 L1047.7,480.1 L1048.7,478.3 L1049.7,477.9 L1050.7,479.3 L1051.7,480.4 L1052.7,481.4 L1053.6,481.0 L1054.6,480.0 L1055.6,480.2 L1056.6,480.1 L1057.6,479.8 L1058.6,479.5 L1059.6,480.1 L1060.6,480.1 L1061.6,480.8 L1062.6,481.1 L1063.6,481.1 L1064.6,481.3 L1065.6,481.8 L1066.6,482.0 L1067.6,482.1 L1068.6,482.7 L1069.6,483.5 L1070.6,483.1 L1071.6,483.5 L1072.6,484.5 L1073.5,484.5 L1074.5,484.6 L1075.5,484.4 L1076.5,484.1 L1077.5,484.5 L1078.5,483.6 L1079.5,483.6 L1080.5,481.9 L1081.5,480.8 L1082.5,478.9 L1083.5,479.9 L1084.5,481.1 L1085.5,481.5 L1086.5,481.1 L1087.5,480.8 L1088.5,479.3 L1089.5,478.6 L1090.5,479.1 L1091.5,480.6 L1092.5,481.4 L1093.4,482.1 L1094.4,481.1 L1095.4,479.9 L1096.4,479.1 L1097.4,479.9 L1098.4,481.7 L1099.4,483.1 L1100.4,481.9 L1101.4,480.3 L1102.4,479.2 L1103.4,479.6 L1104.4,481.2 L1105.4,483.2 L1106.4,482.4 L1107.4,481.4 L1108.4,481.4 L1109.4,480.5 L1110.4,481.4 L1111.4,481.6 L1112.4,482.2 L1113.3,483.2 L1114.3,483.6 L1115.3,484.6 L1116.3,485.6 L1117.3,485.3 L1118.3,485.4 L1119.3,485.8 L1120.3,485.3 L1121.3,485.3 L1122.3,484.2 L1123.3,483.5 L1124.3,482.2 L1125.3,481.9 L1126.3,480.2 L1127.3,478.9 L1128.3,479.3 L1129.3,480.0 L1130.3,480.7 L1131.3,481.9 L1132.3,480.5 L1133.2,479.6 L1134.2,479.2 L1135.2,478.1 L1136.2,479.7 L1137.2,479.6 L1138.2,480.9 L1139.2,482.0 L1140.2,480.8 L1141.2,480.5 L1142.2,479.1 L1143.2,480.1 L1144.2,481.4 L1145.2,482.2 L1146.2,481.7 L1147.2,480.5 L1148.2,480.1 L1149.2,480.9 L1150.2,481.4 L1151.2,481.8 L1152.2,482.9 L1153.1,482.4 L1154.1,481.8 L1155.1,481.4 L1156.1,481.5 L1157.1,481.6 L1158.1,482.3 L1159.1,483.9 L1160.1,484.4 L1161.1,485.6 L1162.1,485.1 L1163.1,485.7 L1164.1,485.6 L1165.1,485.8 L1166.1,485.9 L1167.1,485.7 L1168.1,485.1 L1169.1,485.0 L1170.1,485.5 L1171.1,485.3 L1172.1,485.1 L1173.0,466.4 L1174.0,453.4 L1175.0,449.3 L1176.0,458.7 L1177.0,468.6 L1178.0,477.5 L1179.0,478.4 L1180.0,478.8 L1181.0,478.9 L1182.0,479.7 L1183.0,479.9 L1184.0,479.2 L1185.0,480.2 L1186.0,479.5 L1187.0,478.5 L1188.0,478.7 L1189.0,480.4 L1190.0,480.5 L1191.0,482.2 L1192.0,481.3 L1192.9,480.0 L1193.9,479.5 L1194.9,479.3 L1195.9,480.0 L1196.9,481.0 L1197.9,481.9 L1198.9,482.0 L1199.9,481.2 L1200.9,481.4 L1201.9,479.9 L1202.9,481.6 L1203.9,481.7 L1204.9,483.2 L1205.9,484.1 L1206.9,485.1 L1207.9,485.0 L1208.9,485.6 L1209.9,485.2 L1210.9,485.9 L1211.9,485.3 L1212.8,485.7 L1213.8,485.4 L1214.8,484.9 L1215.8,484.7 L1216.8,483.3 L1217.8,482.3 L1218.8,481.9 L1219.8,481.1 L1220.8,483.7 L1221.8,490.5" fill="none" stroke="#95a0ad" stroke-width="1" stroke-linejoin="round"/><path d="M1023.8,498.0 L1023.8,497.7 L1024.8,491.7 L1025.8,488.0 L1026.8,488.1 L1027.8,487.8 L1028.8,487.9 L1029.8,486.7 L1030.8,487.2 L1031.8,487.6 L1032.8,487.1 L1033.7,487.2 L1034.7,486.1 L1035.7,486.4 L1036.7,485.9 L1037.7,486.1 L1038.7,486.0 L1039.7,485.1 L1040.7,485.4 L1041.7,485.6 L1042.7,486.4 L1043.7,486.3 L1044.7,485.7 L1045.7,486.5 L1046.7,485.8 L1047.7,486.4 L1048.7,485.9 L1049.7,485.8 L1050.7,487.0 L1051.7,486.2 L1052.7,486.3 L1053.6,487.3 L1054.6,487.2 L1055.6,486.6 L1056.6,487.5 L1057.6,487.0 L1058.6,487.2 L1059.6,486.7 L1060.6,487.7 L1061.6,487.4 L1062.6,487.8 L1063.6,487.8 L1064.6,487.1 L1065.6,487.2 L1066.6,487.0 L1067.6,487.1 L1068.6,487.0 L1069.6,487.4 L1070.6,487.8 L1071.6,487.1 L1072.6,487.8 L1073.5,487.3 L1074.5,487.1 L1075.5,487.6 L1076.5,487.1 L1077.5,486.8 L1078.5,486.9 L1079.5,487.0 L1080.5,486.1 L1081.5,487.1 L1082.5,485.8 L1083.5,486.6 L1084.5,486.8 L1085.5,485.8 L1086.5,486.8 L1087.5,486.3 L1088.5,486.6 L1089.5,485.9 L1090.5,486.0 L1091.5,486.2 L1092.5,487.2 L1093.4,486.3 L1094.4,487.0 L1095.4,487.2 L1096.4,487.2 L1097.4,486.5 L1098.4,486.4 L1099.4,486.6 L1100.4,486.9 L1101.4,486.0 L1102.4,486.8 L1103.4,486.8 L1104.4,486.8 L1105.4,485.8 L1106.4,486.9 L1107.4,485.8 L1108.4,486.2 L1109.4,486.7 L1110.4,487.2 L1111.4,486.6 L1112.4,487.4 L1113.3,487.1 L1114.3,486.9 L1115.3,487.0 L1116.3,487.0 L1117.3,487.0 L1118.3,487.2 L1119.3,487.9 L1120.3,487.8 L1121.3,486.3 L1122.3,485.7 L1123.3,486.3 L1124.3,485.7 L1125.3,485.6 L1126.3,485.4 L1127.3,485.8 L1128.3,486.1 L1129.3,485.7 L1130.3,485.6 L1131.3,485.2 L1132.3,486.3 L1133.2,485.3 L1134.2,485.9 L1135.2,486.4 L1136.2,485.7 L1137.2,486.5 L1138.2,486.8 L1139.2,486.5 L1140.2,486.8 L1141.2,486.1 L1142.2,486.5 L1143.2,486.3 L1144.2,487.1 L1145.2,486.5 L1146.2,486.6 L1147.2,487.3 L1148.2,487.1 L1149.2,487.3 L1150.2,486.6 L1151.2,486.7 L1152.2,487.0 L1153.1,486.7 L1154.1,486.5 L1155.1,486.6 L1156.1,486.4 L1157.1,486.8 L1158.1,487.7 L1159.1,487.8 L1160.1,487.5 L1161.1,487.5 L1162.1,487.4 L1163.1,487.3 L1164.1,487.6 L1165.1,488.4 L1166.1,488.6 L1167.1,488.1 L1168.1,488.5 L1169.1,488.4 L1170.1,488.2 L1171.1,488.0 L1172.1,488.0 L1173.0,474.1 L1174.0,461.0 L1175.0,449.9 L1176.0,460.1 L1177.0,472.1 L1178.0,485.6 L1179.0,485.5 L1180.0,486.4 L1181.0,486.1 L1182.0,486.1 L1183.0,485.5 L1184.0,486.2 L1185.0,485.9 L1186.0,486.4 L1187.0,486.3 L1188.0,486.7 L1189.0,486.5 L1190.0,486.8 L1191.0,486.3 L1192.0,486.6 L1192.9,486.8 L1193.9,486.9 L1194.9,486.4 L1195.9,487.0 L1196.9,487.1 L1197.9,486.9 L1198.9,487.3 L1199.9,487.3 L1200.9,486.9 L1201.9,487.0 L1202.9,486.6 L1203.9,487.5 L1204.9,487.7 L1205.9,487.3 L1206.9,487.6 L1207.9,487.7 L1208.9,487.8 L1209.9,487.2 L1210.9,488.0 L1211.9,487.7 L1212.8,487.7 L1213.8,487.2 L1214.8,487.4 L1215.8,487.4 L1216.8,487.1 L1217.8,487.1 L1218.8,486.1 L1219.8,488.5 L1220.8,491.2 L1221.8,493.8 L1221.8,498.0 Z" fill="#fde2bf" stroke="none" stroke-width="0" stroke-linejoin="round"/><path d="M1023.8,497.7 L1024.8,491.7 L1025.8,488.0 L1026.8,488.1 L1027.8,487.8 L1028.8,487.9 L1029.8,486.7 L1030.8,487.2 L1031.8,487.6 L1032.8,487.1 L1033.7,487.2 L1034.7,486.1 L1035.7,486.4 L1036.7,485.9 L1037.7,486.1 L1038.7,486.0 L1039.7,485.1 L1040.7,485.4 L1041.7,485.6 L1042.7,486.4 L1043.7,486.3 L1044.7,485.7 L1045.7,486.5 L1046.7,485.8 L1047.7,486.4 L1048.7,485.9 L1049.7,485.8 L1050.7,487.0 L1051.7,486.2 L1052.7,486.3 L1053.6,487.3 L1054.6,487.2 L1055.6,486.6 L1056.6,487.5 L1057.6,487.0 L1058.6,487.2 L1059.6,486.7 L1060.6,487.7 L1061.6,487.4 L1062.6,487.8 L1063.6,487.8 L1064.6,487.1 L1065.6,487.2 L1066.6,487.0 L1067.6,487.1 L1068.6,487.0 L1069.6,487.4 L1070.6,487.8 L1071.6,487.1 L1072.6,487.8 L1073.5,487.3 L1074.5,487.1 L1075.5,487.6 L1076.5,487.1 L1077.5,486.8 L1078.5,486.9 L1079.5,487.0 L1080.5,486.1 L1081.5,487.1 L1082.5,485.8 L1083.5,486.6 L1084.5,486.8 L1085.5,485.8 L1086.5,486.8 L1087.5,486.3 L1088.5,486.6 L1089.5,485.9 L1090.5,486.0 L1091.5,486.2 L1092.5,487.2 L1093.4,486.3 L1094.4,487.0 L1095.4,487.2 L1096.4,487.2 L1097.4,486.5 L1098.4,486.4 L1099.4,486.6 L1100.4,486.9 L1101.4,486.0 L1102.4,486.8 L1103.4,486.8 L1104.4,486.8 L1105.4,485.8 L1106.4,486.9 L1107.4,485.8 L1108.4,486.2 L1109.4,486.7 L1110.4,487.2 L1111.4,486.6 L1112.4,487.4 L1113.3,487.1 L1114.3,486.9 L1115.3,487.0 L1116.3,487.0 L1117.3,487.0 L1118.3,487.2 L1119.3,487.9 L1120.3,487.8 L1121.3,486.3 L1122.3,485.7 L1123.3,486.3 L1124.3,485.7 L1125.3,485.6 L1126.3,485.4 L1127.3,485.8 L1128.3,486.1 L1129.3,485.7 L1130.3,485.6 L1131.3,485.2 L1132.3,486.3 L1133.2,485.3 L1134.2,485.9 L1135.2,486.4 L1136.2,485.7 L1137.2,486.5 L1138.2,486.8 L1139.2,486.5 L1140.2,486.8 L1141.2,486.1 L1142.2,486.5 L1143.2,486.3 L1144.2,487.1 L1145.2,486.5 L1146.2,486.6 L1147.2,487.3 L1148.2,487.1 L1149.2,487.3 L1150.2,486.6 L1151.2,486.7 L1152.2,487.0 L1153.1,486.7 L1154.1,486.5 L1155.1,486.6 L1156.1,486.4 L1157.1,486.8 L1158.1,487.7 L1159.1,487.8 L1160.1,487.5 L1161.1,487.5 L1162.1,487.4 L1163.1,487.3 L1164.1,487.6 L1165.1,488.4 L1166.1,488.6 L1167.1,488.1 L1168.1,488.5 L1169.1,488.4 L1170.1,488.2 L1171.1,488.0 L1172.1,488.0 L1173.0,474.1 L1174.0,461.0 L1175.0,449.9 L1176.0,460.1 L1177.0,472.1 L1178.0,485.6 L1179.0,485.5 L1180.0,486.4 L1181.0,486.1 L1182.0,486.1 L1183.0,485.5 L1184.0,486.2 L1185.0,485.9 L1186.0,486.4 L1187.0,486.3 L1188.0,486.7 L1189.0,486.5 L1190.0,486.8 L1191.0,486.3 L1192.0,486.6 L1192.9,486.8 L1193.9,486.9 L1194.9,486.4 L1195.9,487.0 L1196.9,487.1 L1197.9,486.9 L1198.9,487.3 L1199.9,487.3 L1200.9,486.9 L1201.9,487.0 L1202.9,486.6 L1203.9,487.5 L1204.9,487.7 L1205.9,487.3 L1206.9,487.6 L1207.9,487.7 L1208.9,487.8 L1209.9,487.2 L1210.9,488.0 L1211.9,487.7 L1212.8,487.7 L1213.8,487.2 L1214.8,487.4 L1215.8,487.4 L1216.8,487.1 L1217.8,487.1 L1218.8,486.1 L1219.8,488.5 L1220.8,491.2 L1221.8,493.8" fill="none" stroke="#d9a36a" stroke-width="1" stroke-linejoin="round"/></svg>
<div class="a t" style="right:243.7px;top:436.5px;font-size:7.6px;color:#888;text-align:right;-webkit-text-stroke:0.1px #888">10M</div>
<div class="a t" style="right:243.7px;top:465.2px;font-size:7.6px;color:#888;text-align:right;-webkit-text-stroke:0.1px #888">5M</div>
<div class="a t" style="right:243.7px;top:493.6px;font-size:7.6px;color:#888;text-align:right;-webkit-text-stroke:0.1px #888">0</div>
<div class="a t" style="left:1012.2px;width:40px;text-align:center;top:503.5px;font-size:7.6px;color:#888;-webkit-text-stroke:0.1px #888">12. Jul</div>
<div class="a t" style="left:1057.2px;width:40px;text-align:center;top:503.5px;font-size:7.6px;color:#888;-webkit-text-stroke:0.1px #888">19. Jul</div>
<div class="a t" style="left:1102.3px;width:40px;text-align:center;top:503.5px;font-size:7.6px;color:#888;-webkit-text-stroke:0.1px #888">26. Jul</div>
<div class="a t" style="left:1147.4px;width:40px;text-align:center;top:503.5px;font-size:7.6px;color:#888;-webkit-text-stroke:0.1px #888">2. Aug</div>
<div class="a t" style="left:1192.5px;width:40px;text-align:center;top:503.5px;font-size:7.6px;color:#888;-webkit-text-stroke:0.1px #888">9. Aug</div>
<div class="a" style="left:1002.5px;top:525px;width:8px;height:8px;background:#7e8893;border-radius:1px"></div>
<div class="a t" style="left:1013.7px;top:524.7px;font-size:8.3px;color:#888">Human</div>
<div class="a" style="left:1053.3px;top:525px;width:8px;height:8px;background:#e8872a;border-radius:1px"></div>
<div class="a t" style="left:1064.4px;top:524.7px;font-size:8.3px;color:#888">Bots</div>
<svg style="left:1211px;top:525px" width="11" height="10" viewBox="0 0 11 10"><path d="M4.2,0 H6.8 V4 H9 L5.5,7.3 L2,4 H4.2 Z" fill="#333"/><rect x="0" y="8" width="11" height="1.6" fill="#333"/></svg>
<div class="a t" style="left:191.5px;top:563px;font-size:10px;color:#333">Requests with errors</div>
<svg style="left:288.5px;top:563.3px" width="8" height="8" viewBox="0 0 8 8"><circle cx="4" cy="4" r="4" fill="#5e6a77"/><rect x="3.4" y="3.3" width="1.2" height="3" fill="#fff"/><circle cx="4" cy="2.1" r="0.7" fill="#fff"/></svg>
<div class="a t" style="left:191.5px;top:581px;font-size:12.5px;color:#222">0.49%</div>
<div class="a t" style="left:233.6px;top:582px;font-size:9.4px;color:#555">1.44 M</div>
<div class="a t" style="left:271px;top:578px;width:36px;height:17px;background:#fbd3d3;color:#c33b3b;font-size:9px;text-align:center;padding-top:4.3px"><svg style="position:relative;display:inline-block;vertical-align:top;margin-top:0.3px;margin-right:1px" width="7" height="8.5" viewBox="0 0 7 8.5"><path d="M3.5,0.5 V7.2 M0.8,4.5 L3.5,7.3 L6.2,4.5" fill="none" stroke="#c33b3b" stroke-width="1.1"/></svg>-13%</div>
<svg style="left:0;top:0" width="1256" height="849"><line x1="222.8" y1="611" x2="425.5" y2="611" stroke="#eceef1" stroke-width="1"/><line x1="222.8" y1="630.3" x2="425.5" y2="630.3" stroke="#eceef1" stroke-width="1"/><line x1="222.8" y1="649.8" x2="425.5" y2="649.8" stroke="#eceef1" stroke-width="1"/><line x1="222.8" y1="669" x2="425.5" y2="669" stroke="#eceef1" stroke-width="1"/><path d="M223.8,669.0 L223.8,668.7 L224.8,666.0 L225.8,663.3 L226.8,662.9 L227.8,662.5 L228.8,662.1 L229.8,661.6 L230.8,659.6 L231.8,657.6 L232.8,655.8 L233.8,656.2 L234.8,656.7 L235.8,657.1 L236.8,657.6 L237.8,655.7 L238.9,652.7 L239.9,649.8 L240.9,647.6 L241.9,651.1 L242.9,654.6 L243.9,658.2 L244.9,657.2 L245.9,652.6 L246.9,649.4 L247.9,652.7 L248.9,656.0 L249.9,658.3 L250.9,656.5 L251.9,654.7 L252.9,652.8 L253.9,653.1 L254.9,654.6 L255.9,656.0 L256.9,657.5 L257.9,655.3 L258.9,652.5 L259.9,649.6 L260.9,650.8 L261.9,653.9 L262.9,656.9 L263.9,659.9 L264.9,660.8 L265.9,661.0 L267.0,661.1 L268.0,661.3 L269.0,661.4 L270.0,661.6 L271.0,661.5 L272.0,660.8 L273.0,660.1 L274.0,659.9 L275.0,660.4 L276.0,660.8 L277.0,661.2 L278.0,657.9 L279.0,654.5 L280.0,651.2 L281.0,650.2 L282.0,652.0 L283.0,653.8 L284.0,653.8 L285.0,651.8 L286.0,649.8 L287.0,649.8 L288.0,651.8 L289.0,653.8 L290.0,655.8 L291.0,656.0 L292.0,654.7 L293.0,653.3 L294.0,653.7 L295.0,655.5 L296.1,657.3 L297.1,659.0 L298.1,659.3 L299.1,658.5 L300.1,657.8 L301.1,657.0 L302.1,657.4 L303.1,658.4 L304.1,659.4 L305.1,659.7 L306.1,659.6 L307.1,659.5 L308.1,659.4 L309.1,659.3 L310.1,659.7 L311.1,660.1 L312.1,660.6 L313.1,661.1 L314.1,661.6 L315.1,661.5 L316.1,661.1 L317.1,660.8 L318.1,660.5 L319.1,660.2 L320.1,660.9 L321.1,662.0 L322.1,663.1 L323.1,662.1 L324.2,660.6 L325.2,659.1 L326.2,657.6 L327.2,657.7 L328.2,658.2 L329.2,658.7 L330.2,658.0 L331.2,657.1 L332.2,656.3 L333.2,655.4 L334.2,656.2 L335.2,657.2 L336.2,658.2 L337.2,659.2 L338.2,658.4 L339.2,657.4 L340.2,656.4 L341.2,657.1 L342.2,658.0 L343.2,658.8 L344.2,659.7 L345.2,659.0 L346.2,658.2 L347.2,657.5 L348.2,656.7 L349.2,657.3 L350.2,657.9 L351.2,658.5 L352.3,659.1 L353.3,659.7 L354.3,658.6 L355.3,657.8 L356.3,659.2 L357.3,660.5 L358.3,661.6 L359.3,660.4 L360.3,659.4 L361.3,660.3 L362.3,661.1 L363.3,662.0 L364.3,662.6 L365.3,662.1 L366.3,661.6 L367.3,661.1 L368.3,660.8 L369.3,661.4 L370.3,661.9 L371.3,662.5 L372.3,658.7 L373.3,652.2 L374.3,634.8 L375.3,620.9 L376.3,637.4 L377.3,649.1 L378.3,652.8 L379.3,653.0 L380.3,653.1 L381.4,653.2 L382.4,653.6 L383.4,654.4 L384.4,655.2 L385.4,655.5 L386.4,654.8 L387.4,654.2 L388.4,654.2 L389.4,655.5 L390.4,656.9 L391.4,657.4 L392.4,656.6 L393.4,655.8 L394.4,655.7 L395.4,656.5 L396.4,657.3 L397.4,657.2 L398.4,655.8 L399.4,654.5 L400.4,654.6 L401.4,656.5 L402.4,658.3 L403.4,659.5 L404.4,660.0 L405.4,660.5 L406.4,661.0 L407.4,661.5 L408.4,662.1 L409.5,662.9 L410.5,663.7 L411.5,663.2 L412.5,661.5 L413.5,659.8 L414.5,660.8 L415.5,662.0 L416.5,663.2 L417.5,662.8 L418.5,661.4 L419.5,659.9 L420.5,660.1 L421.5,661.5 L422.5,662.8 L423.5,663.3 L423.5,669.0 Z" fill="#cdd7f4" stroke="none" stroke-width="0" stroke-linejoin="round"/><path d="M223.8,668.7 L224.8,666.0 L225.8,663.3 L226.8,662.9 L227.8,662.5 L228.8,662.1 L229.8,661.6 L230.8,659.6 L231.8,657.6 L232.8,655.8 L233.8,656.2 L234.8,656.7 L235.8,657.1 L236.8,657.6 L237.8,655.7 L238.9,652.7 L239.9,649.8 L240.9,647.6 L241.9,651.1 L242.9,654.6 L243.9,658.2 L244.9,657.2 L245.9,652.6 L246.9,649.4 L247.9,652.7 L248.9,656.0 L249.9,658.3 L250.9,656.5 L251.9,654.7 L252.9,652.8 L253.9,653.1 L254.9,654.6 L255.9,656.0 L256.9,657.5 L257.9,655.3 L258.9,652.5 L259.9,649.6 L260.9,650.8 L261.9,653.9 L262.9,656.9 L263.9,659.9 L264.9,660.8 L265.9,661.0 L267.0,661.1 L268.0,661.3 L269.0,661.4 L270.0,661.6 L271.0,661.5 L272.0,660.8 L273.0,660.1 L274.0,659.9 L275.0,660.4 L276.0,660.8 L277.0,661.2 L278.0,657.9 L279.0,654.5 L280.0,651.2 L281.0,650.2 L282.0,652.0 L283.0,653.8 L284.0,653.8 L285.0,651.8 L286.0,649.8 L287.0,649.8 L288.0,651.8 L289.0,653.8 L290.0,655.8 L291.0,656.0 L292.0,654.7 L293.0,653.3 L294.0,653.7 L295.0,655.5 L296.1,657.3 L297.1,659.0 L298.1,659.3 L299.1,658.5 L300.1,657.8 L301.1,657.0 L302.1,657.4 L303.1,658.4 L304.1,659.4 L305.1,659.7 L306.1,659.6 L307.1,659.5 L308.1,659.4 L309.1,659.3 L310.1,659.7 L311.1,660.1 L312.1,660.6 L313.1,661.1 L314.1,661.6 L315.1,661.5 L316.1,661.1 L317.1,660.8 L318.1,660.5 L319.1,660.2 L320.1,660.9 L321.1,662.0 L322.1,663.1 L323.1,662.1 L324.2,660.6 L325.2,659.1 L326.2,657.6 L327.2,657.7 L328.2,658.2 L329.2,658.7 L330.2,658.0 L331.2,657.1 L332.2,656.3 L333.2,655.4 L334.2,656.2 L335.2,657.2 L336.2,658.2 L337.2,659.2 L338.2,658.4 L339.2,657.4 L340.2,656.4 L341.2,657.1 L342.2,658.0 L343.2,658.8 L344.2,659.7 L345.2,659.0 L346.2,658.2 L347.2,657.5 L348.2,656.7 L349.2,657.3 L350.2,657.9 L351.2,658.5 L352.3,659.1 L353.3,659.7 L354.3,658.6 L355.3,657.8 L356.3,659.2 L357.3,660.5 L358.3,661.6 L359.3,660.4 L360.3,659.4 L361.3,660.3 L362.3,661.1 L363.3,662.0 L364.3,662.6 L365.3,662.1 L366.3,661.6 L367.3,661.1 L368.3,660.8 L369.3,661.4 L370.3,661.9 L371.3,662.5 L372.3,658.7 L373.3,652.2 L374.3,634.8 L375.3,620.9 L376.3,637.4 L377.3,649.1 L378.3,652.8 L379.3,653.0 L380.3,653.1 L381.4,653.2 L382.4,653.6 L383.4,654.4 L384.4,655.2 L385.4,655.5 L386.4,654.8 L387.4,654.2 L388.4,654.2 L389.4,655.5 L390.4,656.9 L391.4,657.4 L392.4,656.6 L393.4,655.8 L394.4,655.7 L395.4,656.5 L396.4,657.3 L397.4,657.2 L398.4,655.8 L399.4,654.5 L400.4,654.6 L401.4,656.5 L402.4,658.3 L403.4,659.5 L404.4,660.0 L405.4,660.5 L406.4,661.0 L407.4,661.5 L408.4,662.1 L409.5,662.9 L410.5,663.7 L411.5,663.2 L412.5,661.5 L413.5,659.8 L414.5,660.8 L415.5,662.0 L416.5,663.2 L417.5,662.8 L418.5,661.4 L419.5,659.9 L420.5,660.1 L421.5,661.5 L422.5,662.8 L423.5,663.3" fill="none" stroke="#4a6fd4" stroke-width="1" stroke-linejoin="round"/><path d="M223.8,669.0 L223.8,668.7 L224.8,666.7 L225.8,664.7 L226.8,664.3 L227.8,664.0 L228.8,663.6 L229.8,663.2 L230.8,661.4 L231.8,659.5 L232.8,657.8 L233.8,658.2 L234.8,658.7 L235.8,659.1 L236.8,659.6 L237.8,657.6 L238.9,654.5 L239.9,651.4 L240.9,649.3 L241.9,653.4 L242.9,657.4 L243.9,661.5 L244.9,660.4 L245.9,655.1 L246.9,651.5 L247.9,655.7 L248.9,659.9 L249.9,662.8 L250.9,660.2 L251.9,657.7 L252.9,655.1 L253.9,655.6 L254.9,657.8 L255.9,660.1 L256.9,662.4 L257.9,659.5 L258.9,655.7 L259.9,651.9 L260.9,652.9 L261.9,656.1 L262.9,659.3 L263.9,662.4 L264.9,663.4 L265.9,663.5 L267.0,663.6 L268.0,663.8 L269.0,663.9 L270.0,664.0 L271.0,664.0 L272.0,663.7 L273.0,663.5 L274.0,663.3 L275.0,663.5 L276.0,663.6 L277.0,663.6 L278.0,660.0 L279.0,656.3 L280.0,652.7 L281.0,652.1 L282.0,655.1 L283.0,658.2 L284.0,658.6 L285.0,656.2 L286.0,653.9 L287.0,653.8 L288.0,655.8 L289.0,657.8 L290.0,659.8 L291.0,660.0 L292.0,658.6 L293.0,657.3 L294.0,657.7 L295.0,659.3 L296.1,661.0 L297.1,662.6 L298.1,662.9 L299.1,662.3 L300.1,661.6 L301.1,660.9 L302.1,661.3 L303.1,662.3 L304.1,663.3 L305.1,663.6 L306.1,663.4 L307.1,663.2 L308.1,663.0 L309.1,662.8 L310.1,662.9 L311.1,663.2 L312.1,663.5 L313.1,663.7 L314.1,664.0 L315.1,664.0 L316.1,663.8 L317.1,663.7 L318.1,663.5 L319.1,663.3 L320.1,663.7 L321.1,664.1 L322.1,664.6 L323.1,663.9 L324.2,662.9 L325.2,661.9 L326.2,660.9 L327.2,661.4 L328.2,662.3 L329.2,663.2 L330.2,662.5 L331.2,661.6 L332.2,660.7 L333.2,659.8 L334.2,660.5 L335.2,661.4 L336.2,662.3 L337.2,663.2 L338.2,662.5 L339.2,661.6 L340.2,660.7 L341.2,661.4 L342.2,662.2 L343.2,662.9 L344.2,663.7 L345.2,663.0 L346.2,662.2 L347.2,661.4 L348.2,660.7 L349.2,661.3 L350.2,661.9 L351.2,662.5 L352.3,663.1 L353.3,663.6 L354.3,662.6 L355.3,661.8 L356.3,662.8 L357.3,663.8 L358.3,664.6 L359.3,663.6 L360.3,662.8 L361.3,663.3 L362.3,663.8 L363.3,664.3 L364.3,664.6 L365.3,664.3 L366.3,663.9 L367.3,663.6 L368.3,663.4 L369.3,663.8 L370.3,664.1 L371.3,664.5 L372.3,661.9 L373.3,657.4 L374.3,648.5 L375.3,641.5 L376.3,648.7 L377.3,656.2 L378.3,661.6 L379.3,661.4 L380.3,661.1 L381.4,660.9 L382.4,661.0 L383.4,661.8 L384.4,662.7 L385.4,663.0 L386.4,662.1 L387.4,661.3 L388.4,661.1 L389.4,662.1 L390.4,663.1 L391.4,663.4 L392.4,662.8 L393.4,662.1 L394.4,662.0 L395.4,662.6 L396.4,663.3 L397.4,663.3 L398.4,662.3 L399.4,661.3 L400.4,661.1 L401.4,662.0 L402.4,662.8 L403.4,663.4 L404.4,663.5 L405.4,663.7 L406.4,663.9 L407.4,664.0 L408.4,664.3 L409.5,664.7 L410.5,665.1 L411.5,664.9 L412.5,664.1 L413.5,663.3 L414.5,663.9 L415.5,664.5 L416.5,665.0 L417.5,664.9 L418.5,664.2 L419.5,663.6 L420.5,663.6 L421.5,664.1 L422.5,664.5 L423.5,664.7 L423.5,669.0 Z" fill="#fde2bf" stroke="none" stroke-width="0" stroke-linejoin="round"/><path d="M223.8,668.7 L224.8,666.7 L225.8,664.7 L226.8,664.3 L227.8,664.0 L228.8,663.6 L229.8,663.2 L230.8,661.4 L231.8,659.5 L232.8,657.8 L233.8,658.2 L234.8,658.7 L235.8,659.1 L236.8,659.6 L237.8,657.6 L238.9,654.5 L239.9,651.4 L240.9,649.3 L241.9,653.4 L242.9,657.4 L243.9,661.5 L244.9,660.4 L245.9,655.1 L246.9,651.5 L247.9,655.7 L248.9,659.9 L249.9,662.8 L250.9,660.2 L251.9,657.7 L252.9,655.1 L253.9,655.6 L254.9,657.8 L255.9,660.1 L256.9,662.4 L257.9,659.5 L258.9,655.7 L259.9,651.9 L260.9,652.9 L261.9,656.1 L262.9,659.3 L263.9,662.4 L264.9,663.4 L265.9,663.5 L267.0,663.6 L268.0,663.8 L269.0,663.9 L270.0,664.0 L271.0,664.0 L272.0,663.7 L273.0,663.5 L274.0,663.3 L275.0,663.5 L276.0,663.6 L277.0,663.6 L278.0,660.0 L279.0,656.3 L280.0,652.7 L281.0,652.1 L282.0,655.1 L283.0,658.2 L284.0,658.6 L285.0,656.2 L286.0,653.9 L287.0,653.8 L288.0,655.8 L289.0,657.8 L290.0,659.8 L291.0,660.0 L292.0,658.6 L293.0,657.3 L294.0,657.7 L295.0,659.3 L296.1,661.0 L297.1,662.6 L298.1,662.9 L299.1,662.3 L300.1,661.6 L301.1,660.9 L302.1,661.3 L303.1,662.3 L304.1,663.3 L305.1,663.6 L306.1,663.4 L307.1,663.2 L308.1,663.0 L309.1,662.8 L310.1,662.9 L311.1,663.2 L312.1,663.5 L313.1,663.7 L314.1,664.0 L315.1,664.0 L316.1,663.8 L317.1,663.7 L318.1,663.5 L319.1,663.3 L320.1,663.7 L321.1,664.1 L322.1,664.6 L323.1,663.9 L324.2,662.9 L325.2,661.9 L326.2,660.9 L327.2,661.4 L328.2,662.3 L329.2,663.2 L330.2,662.5 L331.2,661.6 L332.2,660.7 L333.2,659.8 L334.2,660.5 L335.2,661.4 L336.2,662.3 L337.2,663.2 L338.2,662.5 L339.2,661.6 L340.2,660.7 L341.2,661.4 L342.2,662.2 L343.2,662.9 L344.2,663.7 L345.2,663.0 L346.2,662.2 L347.2,661.4 L348.2,660.7 L349.2,661.3 L350.2,661.9 L351.2,662.5 L352.3,663.1 L353.3,663.6 L354.3,662.6 L355.3,661.8 L356.3,662.8 L357.3,663.8 L358.3,664.6 L359.3,663.6 L360.3,662.8 L361.3,663.3 L362.3,663.8 L363.3,664.3 L364.3,664.6 L365.3,664.3 L366.3,663.9 L367.3,663.6 L368.3,663.4 L369.3,663.8 L370.3,664.1 L371.3,664.5 L372.3,661.9 L373.3,657.4 L374.3,648.5 L375.3,641.5 L376.3,648.7 L377.3,656.2 L378.3,661.6 L379.3,661.4 L380.3,661.1 L381.4,660.9 L382.4,661.0 L383.4,661.8 L384.4,662.7 L385.4,663.0 L386.4,662.1 L387.4,661.3 L388.4,661.1 L389.4,662.1 L390.4,663.1 L391.4,663.4 L392.4,662.8 L393.4,662.1 L394.4,662.0 L395.4,662.6 L396.4,663.3 L397.4,663.3 L398.4,662.3 L399.4,661.3 L400.4,661.1 L401.4,662.0 L402.4,662.8 L403.4,663.4 L404.4,663.5 L405.4,663.7 L406.4,663.9 L407.4,664.0 L408.4,664.3 L409.5,664.7 L410.5,665.1 L411.5,664.9 L412.5,664.1 L413.5,663.3 L414.5,663.9 L415.5,664.5 L416.5,665.0 L417.5,664.9 L418.5,664.2 L419.5,663.6 L420.5,663.6 L421.5,664.1 L422.5,664.5 L423.5,664.7" fill="none" stroke="#e3a15d" stroke-width="1" stroke-linejoin="round"/><path d="M223.8,668.5 L423.5,668.5" fill="none" stroke="#e39a55" stroke-width="1" stroke-linejoin="round"/></svg>
<div class="a t" style="right:1043.7px;top:607px;font-size:7.6px;color:#888;text-align:right;-webkit-text-stroke:0.1px #888">75k</div>
<div class="a t" style="right:1043.7px;top:626.3px;font-size:7.6px;color:#888;text-align:right;-webkit-text-stroke:0.1px #888">50k</div>
<div class="a t" style="right:1043.7px;top:645.8px;font-size:7.6px;color:#888;text-align:right;-webkit-text-stroke:0.1px #888">25k</div>
<div class="a t" style="right:1043.7px;top:664.7px;font-size:7.6px;color:#888;text-align:right;-webkit-text-stroke:0.1px #888">0</div>
<div class="a t" style="left:212.2px;width:40px;text-align:center;top:674.6px;font-size:7.6px;color:#888;-webkit-text-stroke:0.1px #888">12. Jul</div>
<div class="a t" style="left:257.7px;width:40px;text-align:center;top:674.6px;font-size:7.6px;color:#888;-webkit-text-stroke:0.1px #888">19. Jul</div>
<div class="a t" style="left:303.2px;width:40px;text-align:center;top:674.6px;font-size:7.6px;color:#888;-webkit-text-stroke:0.1px #888">26. Jul</div>
<div class="a t" style="left:348.6px;width:40px;text-align:center;top:674.6px;font-size:7.6px;color:#888;-webkit-text-stroke:0.1px #888">2. Aug</div>
<div class="a t" style="left:394.1px;width:40px;text-align:center;top:674.6px;font-size:7.6px;color:#888;-webkit-text-stroke:0.1px #888">9. Aug</div>
<div class="a" style="left:203.9px;top:695.6px;width:8px;height:8px;background:#1a3fb5;border-radius:1px"></div>
<div class="a t" style="left:214.7px;top:695.3000000000001px;font-size:8.3px;color:#888">Client</div>
<div class="a" style="left:249.9px;top:695.6px;width:8px;height:8px;background:#e8872a;border-radius:1px"></div>
<div class="a t" style="left:260.3px;top:695.3000000000001px;font-size:8.3px;color:#888">Server</div>
<div class="a" style="left:298.5px;top:695.6px;width:8px;height:8px;background:#c0202a;border-radius:1px"></div>
<div class="a t" style="left:309.7px;top:695.3000000000001px;font-size:8.3px;color:#888">Net</div>
<div class="a" style="left:336.3px;top:695.6px;width:8px;height:8px;background:#7e8893;border-radius:1px"></div>
<div class="a t" style="left:347px;top:695.3000000000001px;font-size:8.3px;color:#888">Other</div>
<svg style="left:411.6px;top:696.5px" width="11" height="10" viewBox="0 0 11 10"><path d="M4.2,0 H6.8 V4 H9 L5.5,7.3 L2,4 H4.2 Z" fill="#333"/><rect x="0" y="8" width="11" height="1.6" fill="#333"/></svg>
<div class="a t" style="left:458px;top:563px;font-size:10px;color:#333">Total visits</div>
<svg style="left:510.79999999999995px;top:563.3px" width="8" height="8" viewBox="0 0 8 8"><circle cx="4" cy="4" r="4" fill="#5e6a77"/><rect x="3.4" y="3.3" width="1.2" height="3" fill="#fff"/><circle cx="4" cy="2.1" r="0.7" fill="#fff"/></svg>
<div class="a t" style="left:458.9px;top:578px;width:55px;height:18px;background:#e2e3e5;color:#555;font-size:8px;text-align:center;padding-top:5.3px">16% Human</div>
<div class="a t" style="left:520.4px;top:578px;width:42px;height:18px;background:#fde3c0;color:#b8702a;font-size:8px;text-align:center;padding-top:5.3px">84% Bot</div>
<svg style="left:0;top:0" width="1256" height="849"><line x1="487.8" y1="611" x2="690.9" y2="611" stroke="#eceef1" stroke-width="1"/><line x1="487.8" y1="630.3" x2="690.9" y2="630.3" stroke="#eceef1" stroke-width="1"/><line x1="487.8" y1="649.8" x2="690.9" y2="649.8" stroke="#eceef1" stroke-width="1"/><line x1="487.8" y1="669" x2="690.9" y2="669" stroke="#eceef1" stroke-width="1"/><path d="M488.8,669.0 L488.8,668.4 L489.8,657.2 L490.8,644.4 L491.8,643.5 L492.8,641.4 L493.8,642.1 L494.8,643.3 L495.8,643.0 L496.8,644.0 L497.8,644.3 L498.9,644.4 L499.9,640.9 L500.9,637.1 L501.9,634.2 L502.9,634.4 L503.9,637.2 L504.9,639.1 L505.9,637.6 L506.9,636.1 L507.9,635.6 L508.9,637.1 L509.9,638.3 L510.9,638.0 L511.9,638.2 L512.9,636.8 L513.9,636.8 L514.9,635.8 L515.9,635.3 L517.0,634.2 L518.0,634.2 L519.0,634.7 L520.0,635.5 L521.0,635.8 L522.0,633.9 L523.0,632.8 L524.0,633.7 L525.0,635.6 L526.0,636.0 L527.0,636.2 L528.0,637.5 L529.0,637.6 L530.0,638.5 L531.0,639.6 L532.0,640.0 L533.0,641.1 L534.0,642.6 L535.1,642.9 L536.1,644.4 L537.1,644.4 L538.1,645.6 L539.1,645.5 L540.1,644.7 L541.1,643.6 L542.1,643.5 L543.1,644.5 L544.1,645.8 L545.1,644.0 L546.1,638.9 L547.1,636.5 L548.1,637.5 L549.1,637.3 L550.1,637.7 L551.1,637.5 L552.1,637.4 L553.2,636.9 L554.2,637.0 L555.2,636.7 L556.2,637.2 L557.2,637.8 L558.2,638.9 L559.2,638.0 L560.2,635.6 L561.2,636.2 L562.2,637.1 L563.2,638.7 L564.2,638.8 L565.2,637.5 L566.2,637.4 L567.2,636.3 L568.2,635.5 L569.2,637.1 L570.2,637.8 L571.3,638.9 L572.3,639.1 L573.3,638.6 L574.3,638.4 L575.3,638.1 L576.3,637.8 L577.3,639.1 L578.3,640.1 L579.3,641.3 L580.3,642.3 L581.3,643.3 L582.3,644.8 L583.3,645.6 L584.3,647.1 L585.3,644.8 L586.3,643.0 L587.3,644.5 L588.3,644.9 L589.4,646.1 L590.4,647.3 L591.4,643.9 L592.4,640.4 L593.4,636.9 L594.4,634.5 L595.4,633.1 L596.4,630.6 L597.4,634.5 L598.4,636.9 L599.4,640.1 L600.4,638.8 L601.4,639.2 L602.4,638.5 L603.4,638.3 L604.4,637.7 L605.4,637.1 L606.4,637.8 L607.5,637.1 L608.5,636.5 L609.5,636.3 L610.5,634.4 L611.5,634.9 L612.5,635.1 L613.5,635.6 L614.5,636.5 L615.5,636.9 L616.5,636.9 L617.5,637.5 L618.5,637.8 L619.5,637.2 L620.5,636.2 L621.5,636.4 L622.5,638.2 L623.5,639.9 L624.5,641.7 L625.6,643.8 L626.6,645.3 L627.6,646.8 L628.6,646.3 L629.6,645.7 L630.6,644.6 L631.6,644.8 L632.6,645.2 L633.6,645.2 L634.6,645.6 L635.6,644.0 L636.6,642.5 L637.6,640.7 L638.6,637.7 L639.6,635.2 L640.6,633.0 L641.6,631.4 L642.6,633.0 L643.7,634.1 L644.7,636.5 L645.7,638.5 L646.7,639.1 L647.7,639.2 L648.7,639.3 L649.7,638.5 L650.7,637.9 L651.7,637.0 L652.7,636.3 L653.7,635.9 L654.7,637.3 L655.7,638.1 L656.7,638.6 L657.7,637.5 L658.7,635.8 L659.7,633.6 L660.7,631.1 L661.8,632.5 L662.8,633.6 L663.8,635.6 L664.8,637.9 L665.8,638.3 L666.8,638.0 L667.8,638.2 L668.8,638.7 L669.8,639.1 L670.8,640.3 L671.8,642.0 L672.8,643.3 L673.8,644.9 L674.8,644.7 L675.8,644.2 L676.8,644.0 L677.8,643.8 L678.8,643.2 L679.9,642.8 L680.9,641.6 L681.9,642.0 L682.9,643.3 L683.9,643.6 L684.9,639.0 L685.9,634.0 L686.9,630.5 L687.9,641.0 L688.9,651.5 L688.9,669.0 Z" fill="#fde2bf" stroke="none" stroke-width="0" stroke-linejoin="round"/><path d="M488.8,668.4 L489.8,657.2 L490.8,644.4 L491.8,643.5 L492.8,641.4 L493.8,642.1 L494.8,643.3 L495.8,643.0 L496.8,644.0 L497.8,644.3 L498.9,644.4 L499.9,640.9 L500.9,637.1 L501.9,634.2 L502.9,634.4 L503.9,637.2 L504.9,639.1 L505.9,637.6 L506.9,636.1 L507.9,635.6 L508.9,637.1 L509.9,638.3 L510.9,638.0 L511.9,638.2 L512.9,636.8 L513.9,636.8 L514.9,635.8 L515.9,635.3 L517.0,634.2 L518.0,634.2 L519.0,634.7 L520.0,635.5 L521.0,635.8 L522.0,633.9 L523.0,632.8 L524.0,633.7 L525.0,635.6 L526.0,636.0 L527.0,636.2 L528.0,637.5 L529.0,637.6 L530.0,638.5 L531.0,639.6 L532.0,640.0 L533.0,641.1 L534.0,642.6 L535.1,642.9 L536.1,644.4 L537.1,644.4 L538.1,645.6 L539.1,645.5 L540.1,644.7 L541.1,643.6 L542.1,643.5 L543.1,644.5 L544.1,645.8 L545.1,644.0 L546.1,638.9 L547.1,636.5 L548.1,637.5 L549.1,637.3 L550.1,637.7 L551.1,637.5 L552.1,637.4 L553.2,636.9 L554.2,637.0 L555.2,636.7 L556.2,637.2 L557.2,637.8 L558.2,638.9 L559.2,638.0 L560.2,635.6 L561.2,636.2 L562.2,637.1 L563.2,638.7 L564.2,638.8 L565.2,637.5 L566.2,637.4 L567.2,636.3 L568.2,635.5 L569.2,637.1 L570.2,637.8 L571.3,638.9 L572.3,639.1 L573.3,638.6 L574.3,638.4 L575.3,638.1 L576.3,637.8 L577.3,639.1 L578.3,640.1 L579.3,641.3 L580.3,642.3 L581.3,643.3 L582.3,644.8 L583.3,645.6 L584.3,647.1 L585.3,644.8 L586.3,643.0 L587.3,644.5 L588.3,644.9 L589.4,646.1 L590.4,647.3 L591.4,643.9 L592.4,640.4 L593.4,636.9 L594.4,634.5 L595.4,633.1 L596.4,630.6 L597.4,634.5 L598.4,636.9 L599.4,640.1 L600.4,638.8 L601.4,639.2 L602.4,638.5 L603.4,638.3 L604.4,637.7 L605.4,637.1 L606.4,637.8 L607.5,637.1 L608.5,636.5 L609.5,636.3 L610.5,634.4 L611.5,634.9 L612.5,635.1 L613.5,635.6 L614.5,636.5 L615.5,636.9 L616.5,636.9 L617.5,637.5 L618.5,637.8 L619.5,637.2 L620.5,636.2 L621.5,636.4 L622.5,638.2 L623.5,639.9 L624.5,641.7 L625.6,643.8 L626.6,645.3 L627.6,646.8 L628.6,646.3 L629.6,645.7 L630.6,644.6 L631.6,644.8 L632.6,645.2 L633.6,645.2 L634.6,645.6 L635.6,644.0 L636.6,642.5 L637.6,640.7 L638.6,637.7 L639.6,635.2 L640.6,633.0 L641.6,631.4 L642.6,633.0 L643.7,634.1 L644.7,636.5 L645.7,638.5 L646.7,639.1 L647.7,639.2 L648.7,639.3 L649.7,638.5 L650.7,637.9 L651.7,637.0 L652.7,636.3 L653.7,635.9 L654.7,637.3 L655.7,638.1 L656.7,638.6 L657.7,637.5 L658.7,635.8 L659.7,633.6 L660.7,631.1 L661.8,632.5 L662.8,633.6 L663.8,635.6 L664.8,637.9 L665.8,638.3 L666.8,638.0 L667.8,638.2 L668.8,638.7 L669.8,639.1 L670.8,640.3 L671.8,642.0 L672.8,643.3 L673.8,644.9 L674.8,644.7 L675.8,644.2 L676.8,644.0 L677.8,643.8 L678.8,643.2 L679.9,642.8 L680.9,641.6 L681.9,642.0 L682.9,643.3 L683.9,643.6 L684.9,639.0 L685.9,634.0 L686.9,630.5 L687.9,641.0 L688.9,651.5" fill="none" stroke="#e3a15d" stroke-width="1" stroke-linejoin="round"/><path d="M488.8,669.0 L488.8,668.6 L489.8,667.9 L490.8,667.0 L491.8,667.3 L492.8,666.4 L493.8,666.6 L494.8,666.7 L495.8,665.8 L496.8,665.9 L497.8,665.7 L498.9,664.2 L499.9,663.5 L500.9,662.8 L501.9,661.5 L502.9,661.0 L503.9,661.6 L504.9,662.6 L505.9,663.4 L506.9,663.6 L507.9,663.8 L508.9,663.4 L509.9,663.4 L510.9,662.7 L511.9,662.5 L512.9,661.6 L513.9,661.3 L514.9,661.2 L515.9,660.9 L517.0,660.9 L518.0,660.8 L519.0,661.1 L520.0,661.2 L521.0,661.4 L522.0,662.0 L523.0,661.8 L524.0,662.6 L525.0,662.8 L526.0,662.4 L527.0,662.9 L528.0,663.3 L529.0,663.2 L530.0,663.7 L531.0,664.3 L532.0,663.8 L533.0,664.3 L534.0,664.1 L535.1,664.7 L536.1,665.0 L537.1,664.5 L538.1,664.3 L539.1,664.4 L540.1,664.7 L541.1,664.3 L542.1,664.4 L543.1,664.7 L544.1,664.7 L545.1,663.6 L546.1,662.9 L547.1,662.5 L548.1,661.9 L549.1,662.6 L550.1,662.5 L551.1,663.2 L552.1,663.7 L553.2,663.2 L554.2,663.7 L555.2,663.7 L556.2,663.3 L557.2,663.3 L558.2,663.9 L559.2,663.8 L560.2,663.1 L561.2,663.5 L562.2,663.7 L563.2,663.2 L564.2,663.5 L565.2,663.1 L566.2,663.4 L567.2,663.7 L568.2,663.7 L569.2,663.9 L570.2,663.5 L571.3,663.8 L572.3,664.3 L573.3,664.2 L574.3,664.3 L575.3,664.3 L576.3,664.9 L577.3,664.7 L578.3,664.4 L579.3,665.2 L580.3,664.9 L581.3,665.1 L582.3,665.1 L583.3,665.4 L584.3,665.4 L585.3,665.4 L586.3,665.7 L587.3,665.3 L588.3,665.7 L589.4,665.1 L590.4,665.6 L591.4,665.6 L592.4,665.2 L593.4,664.1 L594.4,662.5 L595.4,663.0 L596.4,662.9 L597.4,662.9 L598.4,663.7 L599.4,663.3 L600.4,663.5 L601.4,664.0 L602.4,663.5 L603.4,663.7 L604.4,663.3 L605.4,663.8 L606.4,663.2 L607.5,663.0 L608.5,663.7 L609.5,663.1 L610.5,663.8 L611.5,663.9 L612.5,663.6 L613.5,663.2 L614.5,663.4 L615.5,663.6 L616.5,663.8 L617.5,664.0 L618.5,664.4 L619.5,664.1 L620.5,664.2 L621.5,664.8 L622.5,664.7 L623.5,664.9 L624.5,665.6 L625.6,665.8 L626.6,665.3 L627.6,665.6 L628.6,665.8 L629.6,665.9 L630.6,665.6 L631.6,666.0 L632.6,665.4 L633.6,665.9 L634.6,665.9 L635.6,666.0 L636.6,665.7 L637.6,664.6 L638.6,663.1 L639.6,662.0 L640.6,660.3 L641.6,659.5 L642.6,659.8 L643.7,661.1 L644.7,661.4 L645.7,662.0 L646.7,662.5 L647.7,662.9 L648.7,663.1 L649.7,663.0 L650.7,663.0 L651.7,663.2 L652.7,663.5 L653.7,663.0 L654.7,663.2 L655.7,662.4 L656.7,663.0 L657.7,662.8 L658.7,662.4 L659.7,662.3 L660.7,662.2 L661.8,662.6 L662.8,662.2 L663.8,662.9 L664.8,663.1 L665.8,663.1 L666.8,663.7 L667.8,664.0 L668.8,663.7 L669.8,664.3 L670.8,664.2 L671.8,664.4 L672.8,664.6 L673.8,664.2 L674.8,664.8 L675.8,664.5 L676.8,664.8 L677.8,664.1 L678.8,664.5 L679.9,664.3 L680.9,664.0 L681.9,664.1 L682.9,663.3 L683.9,663.0 L684.9,662.3 L685.9,661.6 L686.9,660.7 L687.9,661.9 L688.9,663.4 L688.9,669.0 Z" fill="#dfe3ee" stroke="none" stroke-width="0" stroke-linejoin="round"/><path d="M488.8,668.6 L489.8,667.9 L490.8,667.0 L491.8,667.3 L492.8,666.4 L493.8,666.6 L494.8,666.7 L495.8,665.8 L496.8,665.9 L497.8,665.7 L498.9,664.2 L499.9,663.5 L500.9,662.8 L501.9,661.5 L502.9,661.0 L503.9,661.6 L504.9,662.6 L505.9,663.4 L506.9,663.6 L507.9,663.8 L508.9,663.4 L509.9,663.4 L510.9,662.7 L511.9,662.5 L512.9,661.6 L513.9,661.3 L514.9,661.2 L515.9,660.9 L517.0,660.9 L518.0,660.8 L519.0,661.1 L520.0,661.2 L521.0,661.4 L522.0,662.0 L523.0,661.8 L524.0,662.6 L525.0,662.8 L526.0,662.4 L527.0,662.9 L528.0,663.3 L529.0,663.2 L530.0,663.7 L531.0,664.3 L532.0,663.8 L533.0,664.3 L534.0,664.1 L535.1,664.7 L536.1,665.0 L537.1,664.5 L538.1,664.3 L539.1,664.4 L540.1,664.7 L541.1,664.3 L542.1,664.4 L543.1,664.7 L544.1,664.7 L545.1,663.6 L546.1,662.9 L547.1,662.5 L548.1,661.9 L549.1,662.6 L550.1,662.5 L551.1,663.2 L552.1,663.7 L553.2,663.2 L554.2,663.7 L555.2,663.7 L556.2,663.3 L557.2,663.3 L558.2,663.9 L559.2,663.8 L560.2,663.1 L561.2,663.5 L562.2,663.7 L563.2,663.2 L564.2,663.5 L565.2,663.1 L566.2,663.4 L567.2,663.7 L568.2,663.7 L569.2,663.9 L570.2,663.5 L571.3,663.8 L572.3,664.3 L573.3,664.2 L574.3,664.3 L575.3,664.3 L576.3,664.9 L577.3,664.7 L578.3,664.4 L579.3,665.2 L580.3,664.9 L581.3,665.1 L582.3,665.1 L583.3,665.4 L584.3,665.4 L585.3,665.4 L586.3,665.7 L587.3,665.3 L588.3,665.7 L589.4,665.1 L590.4,665.6 L591.4,665.6 L592.4,665.2 L593.4,664.1 L594.4,662.5 L595.4,663.0 L596.4,662.9 L597.4,662.9 L598.4,663.7 L599.4,663.3 L600.4,663.5 L601.4,664.0 L602.4,663.5 L603.4,663.7 L604.4,663.3 L605.4,663.8 L606.4,663.2 L607.5,663.0 L608.5,663.7 L609.5,663.1 L610.5,663.8 L611.5,663.9 L612.5,663.6 L613.5,663.2 L614.5,663.4 L615.5,663.6 L616.5,663.8 L617.5,664.0 L618.5,664.4 L619.5,664.1 L620.5,664.2 L621.5,664.8 L622.5,664.7 L623.5,664.9 L624.5,665.6 L625.6,665.8 L626.6,665.3 L627.6,665.6 L628.6,665.8 L629.6,665.9 L630.6,665.6 L631.6,666.0 L632.6,665.4 L633.6,665.9 L634.6,665.9 L635.6,666.0 L636.6,665.7 L637.6,664.6 L638.6,663.1 L639.6,662.0 L640.6,660.3 L641.6,659.5 L642.6,659.8 L643.7,661.1 L644.7,661.4 L645.7,662.0 L646.7,662.5 L647.7,662.9 L648.7,663.1 L649.7,663.0 L650.7,663.0 L651.7,663.2 L652.7,663.5 L653.7,663.0 L654.7,663.2 L655.7,662.4 L656.7,663.0 L657.7,662.8 L658.7,662.4 L659.7,662.3 L660.7,662.2 L661.8,662.6 L662.8,662.2 L663.8,662.9 L664.8,663.1 L665.8,663.1 L666.8,663.7 L667.8,664.0 L668.8,663.7 L669.8,664.3 L670.8,664.2 L671.8,664.4 L672.8,664.6 L673.8,664.2 L674.8,664.8 L675.8,664.5 L676.8,664.8 L677.8,664.1 L678.8,664.5 L679.9,664.3 L680.9,664.0 L681.9,664.1 L682.9,663.3 L683.9,663.0 L684.9,662.3 L685.9,661.6 L686.9,660.7 L687.9,661.9 L688.9,663.4" fill="none" stroke="#8e99a6" stroke-width="1" stroke-linejoin="round"/></svg>
<div class="a t" style="right:778.7px;top:607px;font-size:7.6px;color:#888;text-align:right;-webkit-text-stroke:0.1px #888">60k</div>
<div class="a t" style="right:778.7px;top:626.3px;font-size:7.6px;color:#888;text-align:right;-webkit-text-stroke:0.1px #888">40k</div>
<div class="a t" style="right:778.7px;top:645.8px;font-size:7.6px;color:#888;text-align:right;-webkit-text-stroke:0.1px #888">20k</div>
<div class="a t" style="right:778.7px;top:664.7px;font-size:7.6px;color:#888;text-align:right;-webkit-text-stroke:0.1px #888">0</div>
<div class="a t" style="left:477.3px;width:40px;text-align:center;top:674.6px;font-size:7.6px;color:#888;-webkit-text-stroke:0.1px #888">12. Jul</div>
<div class="a t" style="left:522.8px;width:40px;text-align:center;top:674.6px;font-size:7.6px;color:#888;-webkit-text-stroke:0.1px #888">19. Jul</div>
<div class="a t" style="left:568.4px;width:40px;text-align:center;top:674.6px;font-size:7.6px;color:#888;-webkit-text-stroke:0.1px #888">26. Jul</div>
<div class="a t" style="left:613.9px;width:40px;text-align:center;top:674.6px;font-size:7.6px;color:#888;-webkit-text-stroke:0.1px #888">2. Aug</div>
<div class="a t" style="left:659.5px;width:40px;text-align:center;top:674.6px;font-size:7.6px;color:#888;-webkit-text-stroke:0.1px #888">9. Aug</div>
<div class="a" style="left:469.2px;top:695.6px;width:8px;height:8px;background:#e8872a;border-radius:1px"></div>
<div class="a t" style="left:480.4px;top:695.3000000000001px;font-size:8.3px;color:#888">Bots</div>
<div class="a" style="left:510.5px;top:695.6px;width:8px;height:8px;background:#7e8893;border-radius:1px"></div>
<div class="a t" style="left:521.7px;top:695.3000000000001px;font-size:8.3px;color:#888">Human</div>
<svg style="left:678px;top:696.5px" width="11" height="10" viewBox="0 0 11 10"><path d="M4.2,0 H6.8 V4 H9 L5.5,7.3 L2,4 H4.2 Z" fill="#333"/><rect x="0" y="8" width="11" height="1.6" fill="#333"/></svg>
<div class="a t" style="left:724.7px;top:563px;font-size:10px;color:#333">Bits / second</div>
<svg style="left:787.4px;top:563.3px" width="8" height="8" viewBox="0 0 8 8"><circle cx="4" cy="4" r="4" fill="#5e6a77"/><rect x="3.4" y="3.3" width="1.2" height="3" fill="#fff"/><circle cx="4" cy="2.1" r="0.7" fill="#fff"/></svg>
<div class="a t" style="left:724.7px;top:581px;font-size:12.5px;color:#222">12 Mbps Avg.</div>
<div class="a t" style="left:808px;top:578px;width:36.5px;height:17px;background:#fbd3d3;color:#c33b3b;font-size:9px;text-align:center;padding-top:4.3px"><svg style="position:relative;display:inline-block;vertical-align:top;margin-top:0.3px;margin-right:1px" width="7" height="8.5" viewBox="0 0 7 8.5"><path d="M3.5,0.5 V7.2 M0.8,4.5 L3.5,7.3 L6.2,4.5" fill="none" stroke="#c33b3b" stroke-width="1.1"/></svg>-58%</div>
<svg style="left:0;top:0" width="1256" height="849"><line x1="762.8" y1="611" x2="958.2" y2="611" stroke="#eceef1" stroke-width="1"/><line x1="762.8" y1="639.8" x2="958.2" y2="639.8" stroke="#eceef1" stroke-width="1"/><line x1="762.8" y1="669" x2="958.2" y2="669" stroke="#eceef1" stroke-width="1"/><path d="M763.8,669.0 L763.8,646.0 L764.8,649.7 L765.7,653.7 L766.7,652.7 L767.7,652.6 L768.6,651.9 L769.6,651.0 L770.6,649.2 L771.5,648.1 L772.5,646.4 L773.5,644.9 L774.4,643.6 L775.4,641.4 L776.4,638.1 L777.3,639.2 L778.3,640.6 L779.3,642.0 L780.2,641.7 L781.2,640.4 L782.2,638.6 L783.1,639.2 L784.1,641.6 L785.1,643.4 L786.0,646.5 L787.0,647.4 L788.0,645.2 L788.9,642.6 L789.9,640.9 L790.9,643.0 L791.8,645.3 L792.8,647.7 L793.8,646.1 L794.7,645.3 L795.7,645.0 L796.7,643.7 L797.6,645.1 L798.6,646.2 L799.6,647.1 L800.5,648.8 L801.5,648.8 L802.5,647.8 L803.4,647.5 L804.4,647.3 L805.4,647.8 L806.3,649.3 L807.3,650.7 L808.3,651.6 L809.2,651.4 L810.2,651.3 L811.2,650.1 L812.1,650.0 L813.1,649.8 L814.1,650.2 L815.0,650.0 L816.0,650.9 L817.0,649.6 L817.9,648.1 L818.9,647.2 L819.9,645.8 L820.8,643.8 L821.8,643.1 L822.8,644.2 L823.7,645.4 L824.7,646.9 L825.7,647.1 L826.6,645.7 L827.6,644.6 L828.6,643.2 L829.5,645.0 L830.5,646.5 L831.5,647.8 L832.4,648.7 L833.4,647.5 L834.4,646.5 L835.3,645.0 L836.3,646.8 L837.3,647.7 L838.2,649.0 L839.2,648.0 L840.2,647.2 L841.1,646.2 L842.1,646.9 L843.1,649.0 L844.0,650.4 L845.0,649.4 L846.0,647.9 L846.9,646.5 L847.9,646.5 L848.9,648.5 L849.8,649.9 L850.8,651.4 L851.8,651.6 L852.7,651.7 L853.7,651.9 L854.7,652.2 L855.6,652.1 L856.6,651.9 L857.6,651.5 L858.5,651.9 L859.5,653.0 L860.5,653.1 L861.5,652.8 L862.4,649.9 L863.4,647.5 L864.4,644.1 L865.3,641.4 L866.3,642.1 L867.3,643.1 L868.2,644.3 L869.2,643.3 L870.2,642.8 L871.1,642.3 L872.1,641.9 L873.1,642.2 L874.0,643.1 L875.0,643.8 L876.0,644.2 L876.9,644.2 L877.9,644.6 L878.9,645.0 L879.8,644.4 L880.8,644.3 L881.8,644.4 L882.7,644.1 L883.7,643.7 L884.7,644.0 L885.6,645.4 L886.6,646.3 L887.6,647.7 L888.5,648.5 L889.5,647.6 L890.5,647.7 L891.4,647.2 L892.4,647.5 L893.4,648.1 L894.3,650.4 L895.3,651.8 L896.3,653.3 L897.2,653.8 L898.2,653.6 L899.2,654.4 L900.1,654.3 L901.1,652.2 L902.1,650.0 L903.0,646.7 L904.0,643.9 L905.0,640.8 L905.9,638.0 L906.9,635.1 L907.9,630.0 L908.8,625.4 L909.8,619.8 L910.8,621.1 L911.7,625.9 L912.7,630.4 L913.7,633.5 L914.6,636.0 L915.6,638.8 L916.6,641.4 L917.5,644.0 L918.5,647.0 L919.5,648.7 L920.4,648.2 L921.4,647.3 L922.4,647.2 L923.3,647.4 L924.3,648.0 L925.3,648.4 L926.2,648.0 L927.2,646.8 L928.2,645.0 L929.1,643.7 L930.1,643.4 L931.1,643.2 L932.0,643.2 L933.0,644.5 L934.0,645.7 L934.9,647.5 L935.9,645.2 L936.9,643.0 L937.8,644.7 L938.8,647.1 L939.8,649.3 L940.7,651.9 L941.7,652.4 L942.7,652.8 L943.6,653.2 L944.6,653.6 L945.6,653.4 L946.5,652.7 L947.5,652.1 L948.5,651.0 L949.4,650.9 L950.4,650.7 L951.4,650.4 L952.3,648.1 L953.3,643.6 L954.3,644.6 L955.2,650.2 L956.2,655.0 L956.2,669.0 Z" fill="#aab3be" stroke="none" stroke-width="0" stroke-linejoin="round"/><path d="M763.8,646.0 L764.8,649.7 L765.7,653.7 L766.7,652.7 L767.7,652.6 L768.6,651.9 L769.6,651.0 L770.6,649.2 L771.5,648.1 L772.5,646.4 L773.5,644.9 L774.4,643.6 L775.4,641.4 L776.4,638.1 L777.3,639.2 L778.3,640.6 L779.3,642.0 L780.2,641.7 L781.2,640.4 L782.2,638.6 L783.1,639.2 L784.1,641.6 L785.1,643.4 L786.0,646.5 L787.0,647.4 L788.0,645.2 L788.9,642.6 L789.9,640.9 L790.9,643.0 L791.8,645.3 L792.8,647.7 L793.8,646.1 L794.7,645.3 L795.7,645.0 L796.7,643.7 L797.6,645.1 L798.6,646.2 L799.6,647.1 L800.5,648.8 L801.5,648.8 L802.5,647.8 L803.4,647.5 L804.4,647.3 L805.4,647.8 L806.3,649.3 L807.3,650.7 L808.3,651.6 L809.2,651.4 L810.2,651.3 L811.2,650.1 L812.1,650.0 L813.1,649.8 L814.1,650.2 L815.0,650.0 L816.0,650.9 L817.0,649.6 L817.9,648.1 L818.9,647.2 L819.9,645.8 L820.8,643.8 L821.8,643.1 L822.8,644.2 L823.7,645.4 L824.7,646.9 L825.7,647.1 L826.6,645.7 L827.6,644.6 L828.6,643.2 L829.5,645.0 L830.5,646.5 L831.5,647.8 L832.4,648.7 L833.4,647.5 L834.4,646.5 L835.3,645.0 L836.3,646.8 L837.3,647.7 L838.2,649.0 L839.2,648.0 L840.2,647.2 L841.1,646.2 L842.1,646.9 L843.1,649.0 L844.0,650.4 L845.0,649.4 L846.0,647.9 L846.9,646.5 L847.9,646.5 L848.9,648.5 L849.8,649.9 L850.8,651.4 L851.8,651.6 L852.7,651.7 L853.7,651.9 L854.7,652.2 L855.6,652.1 L856.6,651.9 L857.6,651.5 L858.5,651.9 L859.5,653.0 L860.5,653.1 L861.5,652.8 L862.4,649.9 L863.4,647.5 L864.4,644.1 L865.3,641.4 L866.3,642.1 L867.3,643.1 L868.2,644.3 L869.2,643.3 L870.2,642.8 L871.1,642.3 L872.1,641.9 L873.1,642.2 L874.0,643.1 L875.0,643.8 L876.0,644.2 L876.9,644.2 L877.9,644.6 L878.9,645.0 L879.8,644.4 L880.8,644.3 L881.8,644.4 L882.7,644.1 L883.7,643.7 L884.7,644.0 L885.6,645.4 L886.6,646.3 L887.6,647.7 L888.5,648.5 L889.5,647.6 L890.5,647.7 L891.4,647.2 L892.4,647.5 L893.4,648.1 L894.3,650.4 L895.3,651.8 L896.3,653.3 L897.2,653.8 L898.2,653.6 L899.2,654.4 L900.1,654.3 L901.1,652.2 L902.1,650.0 L903.0,646.7 L904.0,643.9 L905.0,640.8 L905.9,638.0 L906.9,635.1 L907.9,630.0 L908.8,625.4 L909.8,619.8 L910.8,621.1 L911.7,625.9 L912.7,630.4 L913.7,633.5 L914.6,636.0 L915.6,638.8 L916.6,641.4 L917.5,644.0 L918.5,647.0 L919.5,648.7 L920.4,648.2 L921.4,647.3 L922.4,647.2 L923.3,647.4 L924.3,648.0 L925.3,648.4 L926.2,648.0 L927.2,646.8 L928.2,645.0 L929.1,643.7 L930.1,643.4 L931.1,643.2 L932.0,643.2 L933.0,644.5 L934.0,645.7 L934.9,647.5 L935.9,645.2 L936.9,643.0 L937.8,644.7 L938.8,647.1 L939.8,649.3 L940.7,651.9 L941.7,652.4 L942.7,652.8 L943.6,653.2 L944.6,653.6 L945.6,653.4 L946.5,652.7 L947.5,652.1 L948.5,651.0 L949.4,650.9 L950.4,650.7 L951.4,650.4 L952.3,648.1 L953.3,643.6 L954.3,644.6 L955.2,650.2 L956.2,655.0" fill="none" stroke="#7c8692" stroke-width="1" stroke-linejoin="round"/><line x1="763.8" y1="638.2" x2="959.2" y2="638.2" stroke="#ec6a6a" stroke-width="0.9" stroke-dasharray="1.8,1.2"/></svg>
<div class="a t" style="right:503.7px;top:607px;font-size:7.6px;color:#888;text-align:right;-webkit-text-stroke:0.1px #888">16 Mb</div>
<div class="a t" style="right:503.7px;top:635.8px;font-size:7.6px;color:#888;text-align:right;-webkit-text-stroke:0.1px #888">8 Mb</div>
<div class="a t" style="right:503.7px;top:664.7px;font-size:7.6px;color:#888;text-align:right;-webkit-text-stroke:0.1px #888">0 b</div>
<div class="a t" style="left:751.9px;width:40px;text-align:center;top:674.6px;font-size:7.6px;color:#888;-webkit-text-stroke:0.1px #888">12. Jul</div>
<div class="a t" style="left:795.7px;width:40px;text-align:center;top:674.6px;font-size:7.6px;color:#888;-webkit-text-stroke:0.1px #888">19. Jul</div>
<div class="a t" style="left:839.5px;width:40px;text-align:center;top:674.6px;font-size:7.6px;color:#888;-webkit-text-stroke:0.1px #888">26. Jul</div>
<div class="a t" style="left:883.3px;width:40px;text-align:center;top:674.6px;font-size:7.6px;color:#888;-webkit-text-stroke:0.1px #888">2. Aug</div>
<div class="a t" style="left:927.1px;width:40px;text-align:center;top:674.6px;font-size:7.6px;color:#888;-webkit-text-stroke:0.1px #888">9. Aug</div>
<div class="a" style="left:736.1px;top:695.6px;width:8px;height:8px;background:#5f6b78;border-radius:1px"></div>
<div class="a t" style="left:747.5px;top:695.3000000000001px;font-size:8.3px;color:#888">Bits / sec</div>
<svg style="left:795.8px;top:696.1px" width="7" height="7"><rect x="0" y="0" width="1.6" height="7" fill="#e03a3a"/><rect x="2.7" y="0" width="1.6" height="7" fill="#e03a3a"/><rect x="5.4" y="0" width="1.6" height="7" fill="#e03a3a"/></svg>
<div class="a t" style="left:806.8px;top:695.3000000000001px;font-size:8.3px;color:#888">95th Percentile</div>
<svg style="left:944px;top:696.5px" width="11" height="10" viewBox="0 0 11 10"><path d="M4.2,0 H6.8 V4 H9 L5.5,7.3 L2,4 H4.2 Z" fill="#333"/><rect x="0" y="8" width="11" height="1.6" fill="#333"/></svg>
<div class="a t" style="left:991px;top:563px;font-size:10px;color:#333">HTTP version</div>
<svg style="left:1055.5px;top:563.3px" width="8" height="8" viewBox="0 0 8 8"><circle cx="4" cy="4" r="4" fill="#5e6a77"/><rect x="3.4" y="3.3" width="1.2" height="3" fill="#fff"/><circle cx="4" cy="2.1" r="0.7" fill="#fff"/></svg>
<svg style="left:1070.8px;top:592.2px" width="80" height="80" viewBox="0 0 80 80"><g transform="rotate(-90 40 40)"><circle cx="40" cy="40" r="28.5" fill="none" stroke="#4b1b7d" stroke-width="9.5"/><circle cx="40" cy="40" r="28.5" fill="none" stroke="#5384ea" stroke-width="9.5" stroke-dasharray="114.61 179.07"/><line x1="63.0" y1="40" x2="74.0" y2="40" stroke="#fff" stroke-width="1"/><line x1="63.0" y1="40" x2="74.0" y2="40" stroke="#fff" stroke-width="1" transform="rotate(230.4 40 40)"/></g></svg>
<div class="a t" style="left:1051px;top:615px;font-size:7.8px;font-weight:700;color:#222">36%</div>
<div class="a t" style="left:1154.5px;top:645.5px;font-size:7.8px;font-weight:700;color:#222">64%</div>
<div class="a" style="left:996.2px;top:692.7px;width:8px;height:8px;background:#a9b2bd;border-radius:1px"></div>
<div class="a t" style="left:1007.7px;top:692.4000000000001px;font-size:8.3px;color:#888">HTTP 1.0</div>
<div class="a" style="left:1054.1px;top:692.7px;width:8px;height:8px;background:#5384ea;border-radius:1px"></div>
<div class="a t" style="left:1065.6px;top:692.4000000000001px;font-size:8.3px;color:#888">HTTP 1.1</div>
<div class="a" style="left:1112.5px;top:692.7px;width:8px;height:8px;background:#4b1b7d;border-radius:1px"></div>
<div class="a t" style="left:1124px;top:692.4000000000001px;font-size:8.3px;color:#888">HTTP 2.0</div>
<svg style="left:1211px;top:692.5px" width="11" height="10" viewBox="0 0 11 10"><path d="M4.2,0 H6.8 V4 H9 L5.5,7.3 L2,4 H4.2 Z" fill="#333"/><rect x="0" y="8" width="11" height="1.6" fill="#333"/></svg>
<div class="card" style="left:173px;top:728px;width:530px;height:130px"></div>
<div class="card" style="left:713px;top:728px;width:531px;height:130px"></div>
<div class="a t" style="left:190.6px;top:750px;font-size:10px;color:#333">Origin data center</div>
<div class="a" style="left:188px;top:763px;width:84px;height:2px;background:#2846b8"></div>
<div class="a t" style="left:283.7px;top:750px;font-size:9.8px;color:#d9dbe0">Imperva data center latency</div>
<div class="a" style="left:282px;top:763.5px;width:128px;height:1.5px;background:#c8cace"></div>
<svg style="left:195px;top:778px" width="7" height="8" viewBox="0 0 7 8"><path d="M1,1 L3.5,3.3 L6,1 M1,4.5 L3.5,6.8 L6,4.5" fill="none" stroke="#333" stroke-width="1.4"/></svg>
<div class="a t" style="left:232.4px;top:777px;font-size:9.3px;font-weight:700;color:#333">Data centers (8/8)</div>
<div class="a t" style="left:343.4px;top:777px;font-size:9.3px;font-weight:700;color:#333">Location</div>
<div class="a t" style="left:443.4px;top:777px;font-size:9.3px;font-weight:700;color:#333">Current</div>
<div class="a t" style="left:495.2px;top:777px;font-size:9.3px;font-weight:700;color:#333">History</div>
<div class="a t" style="left:569.3px;top:777px;font-size:9.3px;font-weight:700;color:#333">Avg. res time</div>
<svg style="left:631px;top:776.5px" width="8" height="8" viewBox="0 0 8 8"><circle cx="4" cy="4" r="4" fill="#5e6a77"/><rect x="3.4" y="3.3" width="1.2" height="3" fill="#fff"/><circle cx="4" cy="2.1" r="0.7" fill="#fff"/></svg>
<div class="a" style="left:188px;top:795px;width:490px;height:1px;background:#a9adb3"></div>
<div class="a" style="left:188px;top:825px;width:490px;height:1px;background:#e6e8eb"></div>
<div class="a" style="left:680px;top:768px;width:5px;height:90px;background:#c4c4c4;border-radius:1px"></div>
<svg style="left:196px;top:808.8px" width="6" height="4" viewBox="0 0 6 4"><path d="M0.7,0.7 L3,3 L5.3,0.7" fill="none" stroke="#333" stroke-width="1.3"/></svg>
<div class="a t" style="left:232.4px;top:805.8px;font-size:9.8px;color:#333">AMY (4/4)</div>
<div class="a t" style="left:343.4px;top:805.8px;font-size:9.8px;color:#333">Ashburn, VA</div>
<svg style="left:443px;top:806.3px" width="8" height="9" viewBox="0 0 8 9"><path d="M4,9 V1.5 M0.8,4.5 L4,1.2 L7.2,4.5" fill="none" stroke="#2aa273" stroke-width="1.5"/></svg>
<div class="a t" style="left:569.3px;top:805.8px;font-size:9.8px;color:#333">469ms</div>
<svg style="left:196px;top:838.6px" width="6" height="4" viewBox="0 0 6 4"><path d="M0.7,0.7 L3,3 L5.3,0.7" fill="none" stroke="#333" stroke-width="1.3"/></svg>
<div class="a t" style="left:232.4px;top:835.6px;font-size:9.8px;color:#333">AMY API (3/3)</div>
<svg style="left:443px;top:836.1px" width="8" height="9" viewBox="0 0 8 9"><path d="M4,9 V1.5 M0.8,4.5 L4,1.2 L7.2,4.5" fill="none" stroke="#2aa273" stroke-width="1.5"/></svg>
<div class="a t" style="left:569.3px;top:835.6px;font-size:9.8px;color:#333">696ms</div>
<div class="a t" style="left:732.2px;top:750px;font-size:10px;color:#333">Visits by country</div>
<div class="a" style="left:730px;top:763.5px;width:78px;height:2px;background:#2846b8"></div>
<div class="a t" style="left:819.4px;top:750px;font-size:9.8px;color:#d9dbe0">Visits by client</div>
<div class="a" style="left:817px;top:764px;width:69px;height:1.5px;background:#c8cace"></div>
<div class="a" style="left:1214px;top:739.5px;width:20px;height:20px;border:1px solid #dcdfe4;border-radius:4px"></div>
<svg style="left:1223px;top:744.5px" width="2" height="10"><circle cx="1" cy="1" r="0.9" fill="#444"/><circle cx="1" cy="5" r="0.9" fill="#444"/><circle cx="1" cy="9" r="0.9" fill="#444"/></svg>
<div class="a" style="left:730.5px;top:781.5px;width:331px;height:80px;border:1px solid #e8eaee;border-radius:3px"></div>
<div class="a t" style="left:1086px;top:787px;font-size:9.4px;font-weight:700;color:#333">Country</div>
<div class="a t" style="left:1163px;top:787px;font-size:9.4px;font-weight:700;color:#333">Visits</div>
<div class="a" style="left:1075.5px;top:805.5px;width:153px;height:1.5px;background:#a9adb3"></div>
<div class="a t" style="left:1086px;top:816.5px;font-size:9.8px;color:#333">Unknown</div>
<div class="a t" style="left:1163px;top:816.5px;font-size:9.8px;color:#333">33%</div>
<div class="a" style="left:1189.5px;top:818.5px;width:28px;height:6px;background:#e4e5e8;border-radius:3px"></div>
<div class="a" style="left:1189.5px;top:818.5px;width:10px;height:6px;background:#4a78e0;border-radius:3px 0 0 3px"></div>
<div class="a" style="left:1075.5px;top:835.5px;width:153px;height:1px;background:#eceef1"></div>
<svg style="left:0;top:0" width="1256" height="849"><g fill="none" stroke="#d0d8e2" stroke-width="0.8"><path d="M785,846 L792,843 L800,844 L806,840 L815,842 L822,838 L832,839 L840,836 L850,837 L858,834 L868,835 L876,838 L879,843 L876,848"/><path d="M798,848 L805,845 L812,847 L820,844 L828,847 M830,842 L838,845 L845,841"/><path d="M898,845 L905,842 L912,844 L918,841 M900,848 L908,846 L916,848"/><path d="M928,843 L936,841 L947,842 M936,840 L940,839"/><path d="M969,839 L974,837 L979,840 L983,845 L978,846 L972,843 Z"/></g></svg>
<div class="a" style="left:0;top:847px;width:1256px;height:2px;background:#fff"></div>
<svg style="left:296.5px;top:13px" width="11" height="11" viewBox="0 0 11 11"><path d="M1.2,10 V4.8 L5.5,1 L9.8,4.8 V10 H6.8 V7 H4.2 V10 Z" fill="none" stroke="#c8c8c8" stroke-width="1.2" stroke-linejoin="round"/></svg>
<svg style="left:362.5px;top:13px" width="11" height="11" viewBox="0 0 11 11"><path d="M5.5,1 L10,3.2 L5.5,5.4 L1,3.2 Z M1,5.5 L5.5,7.7 L10,5.5 M1,7.8 L5.5,10 L10,7.8" fill="none" stroke="#c8c8c8" stroke-width="1.1" stroke-linejoin="round"/></svg>
<svg style="left:452px;top:12.5px" width="11" height="11" viewBox="0 0 11 11"><circle cx="5.5" cy="5.5" r="5" fill="#fff"/><path d="M2,3 C3.5,3 4.5,4 4,5.5 C3.5,7 5,7.5 4.5,10 M6.5,1 C6,2.5 7.5,3.5 8.5,3 M10.2,6.5 C8.5,6 7,7 7.5,9.8" fill="none" stroke="#000" stroke-width="1.1"/></svg>
<svg style="left:515px;top:13px" width="10" height="11" viewBox="0 0 10 11"><ellipse cx="5" cy="2.2" rx="4.2" ry="1.6" fill="none" stroke="#c8c8c8" stroke-width="1.1"/><path d="M0.8,2.2 V8.8 C0.8,10 9.2,10 9.2,8.8 V2.2 M0.8,4.4 C0.8,5.6 9.2,5.6 9.2,4.4 M0.8,6.6 C0.8,7.8 9.2,7.8 9.2,6.6" fill="none" stroke="#c8c8c8" stroke-width="1.1"/></svg>
<svg style="left:973px;top:13px" width="11" height="11" viewBox="0 0 11 11"><circle cx="4.8" cy="4.8" r="3.8" fill="none" stroke="#bdbdbd" stroke-width="1.2"/><path d="M7.6,7.6 L10.2,10.2" stroke="#bdbdbd" stroke-width="1.3"/></svg>
<div class="a t" style="left:1049px;top:13px;font-size:12.5px;font-weight:700;color:#fff">?</div>
<svg style="left:1084.5px;top:16px" width="7" height="4"><path d="M0,0 H7 L3.5,4 Z" fill="#fff"/></svg>
<svg style="left:1109.5px;top:12px" width="10" height="12" viewBox="0 0 10 12"><circle cx="5" cy="3" r="2.8" fill="#fff"/><path d="M0,11.5 C0,7 2,6.5 5,6.5 C8,6.5 10,7 10,11.5 Z" fill="#fff"/></svg>
<svg style="left:1164px;top:16px" width="7" height="4"><path d="M0,0 H7 L3.5,4 Z" fill="#fff"/></svg>
<svg style="left:1188.5px;top:12.5px" width="11" height="11" viewBox="0 0 11 11"><g fill="#e8832a"><circle cx="5.5" cy="5.5" r="3.8"/><rect x="4.3" y="0" width="2.4" height="11"/><rect x="0" y="4.3" width="11" height="2.4"/><rect x="4.3" y="0" width="2.4" height="11" transform="rotate(45 5.5 5.5)"/><rect x="4.3" y="0" width="2.4" height="11" transform="rotate(-45 5.5 5.5)"/></g><circle cx="5.5" cy="5.5" r="1.6" fill="#000"/></svg>
<svg style="left:1236px;top:16px" width="7" height="4"><path d="M0,0 H7 L3.5,4 Z" fill="#e8832a"/></svg>
<svg style="left:9px;top:50.5px" width="12" height="12" viewBox="0 0 12 12"><circle cx="6" cy="6" r="5.6" fill="#bdbdbd"/><path d="M2,3.4 C3.6,3.2 4.6,4.3 4.1,6 C3.6,7.6 5.2,8.4 4.7,11.2 M7,0.6 C6.6,2.5 8.1,3.6 9.6,3 M11.4,7 C9.6,6.6 7.9,7.6 8.4,10.8" fill="none" stroke="#212121" stroke-width="1.2"/></svg>
<svg style="left:8px;top:103.5px" width="15" height="14" viewBox="0 0 15 14"><rect x="0.6" y="0.6" width="12" height="12" fill="none" stroke="#d8d8d8" stroke-width="1.1"/><path d="M0.6,4.6 H12.6 M0.6,8.6 H8 M2.2,2.6 H4.2 M2.2,6.6 H4.2 M2.2,10.6 H4.2" stroke="#d8d8d8" stroke-width="1"/><path d="M10.5,7.2 L14.5,8.3 V10.6 C14.5,12.4 12.5,13.6 10.5,14 C8.5,13.6 6.8,12.4 6.8,10.6 V8.3 Z" fill="#fff"/></svg>
<svg style="left:9px;top:256px" width="13" height="14" viewBox="0 0 13 14"><path d="M5,12.5 C2,9 0.8,6.8 0.8,4.8 C0.8,2.4 2.7,0.6 5,0.6 C7.3,0.6 9.2,2.4 9.2,4.8" fill="none" stroke="#d8d8d8" stroke-width="1.1"/><rect x="3.4" y="3" width="3.2" height="3.4" fill="none" stroke="#d8d8d8" stroke-width="0.9"/><path d="M9,7 L12.6,8 V10.2 C12.6,11.8 10.8,13 9,13.4 C7.2,13 5.5,11.8 5.5,10.2 V8 Z" fill="#fff"/></svg>
<svg style="left:7.5px;top:347.5px" width="15" height="15" viewBox="0 0 15 15"><circle cx="6.5" cy="6.5" r="5.8" fill="none" stroke="#d8d8d8" stroke-width="1.1"/><ellipse cx="6.5" cy="6.5" rx="2.6" ry="5.8" fill="none" stroke="#d8d8d8" stroke-width="1"/><path d="M0.7,6.5 H12.3 M1.5,3.5 H11.5 M1.5,9.5 H8" stroke="#d8d8d8" stroke-width="0.9"/><path d="M11,8 L14.6,9 V11.2 C14.6,12.8 12.8,14 11,14.4 C9.2,14 7.5,12.8 7.5,11.2 V9 Z" fill="#fff"/></svg>
<svg style="left:145px;top:107.5px" width="10" height="6" viewBox="0 0 10 6"><path d="M1,1 L5,5 L9,1" fill="none" stroke="#d8d8d8" stroke-width="1.4"/></svg>
<svg style="left:145px;top:260px" width="10" height="6" viewBox="0 0 10 6"><path d="M1,1 L5,5 L9,1" fill="none" stroke="#d8d8d8" stroke-width="1.4"/></svg>
<svg style="left:145px;top:351.5px" width="10" height="6" viewBox="0 0 10 6"><path d="M1,1 L5,5 L9,1" fill="none" stroke="#d8d8d8" stroke-width="1.4"/></svg>
</body></html>
